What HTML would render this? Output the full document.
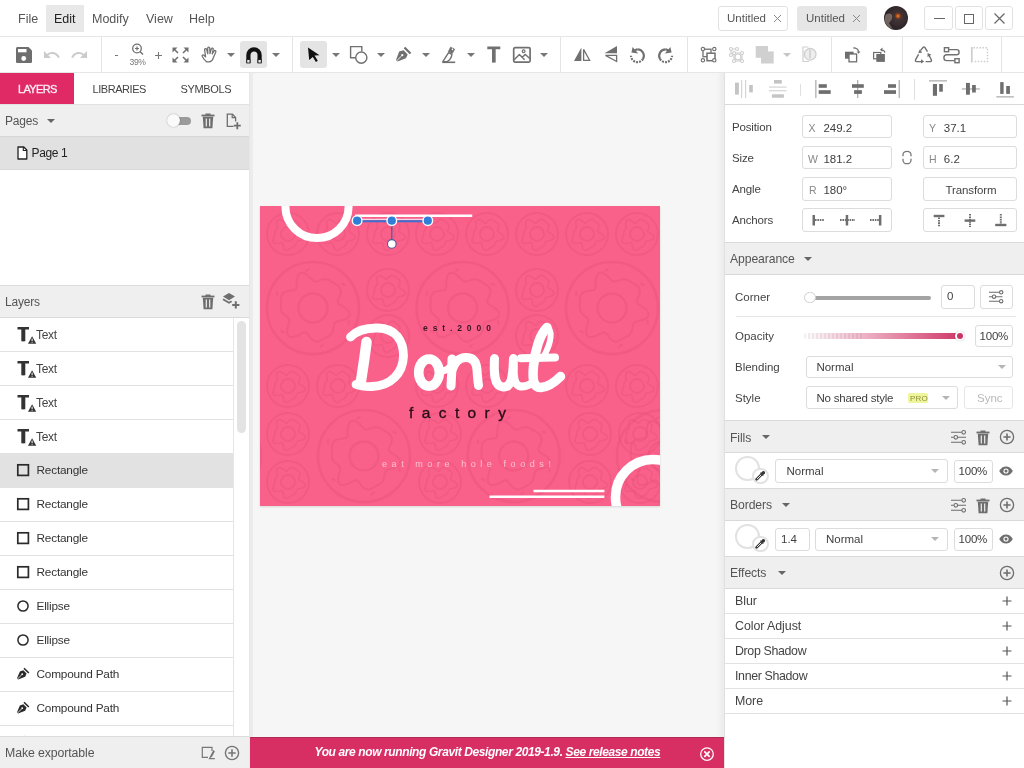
<!DOCTYPE html>
<html><head><meta charset="utf-8">
<style>
*{box-sizing:border-box;margin:0;padding:0}
html,body{width:1024px;height:768px;overflow:hidden;-webkit-font-smoothing:antialiased;background:#fff;font-family:"Liberation Sans",sans-serif;color:#444;font-size:13px}
.a{position:absolute}
.t{position:absolute;white-space:nowrap;line-height:1}
svg{position:absolute;overflow:visible}
.vs{position:absolute;width:1px;background:#e4e4e4}
.hs{position:absolute;height:1px;background:#e4e4e4}
.dd{position:absolute;width:0;height:0;border-left:4px solid transparent;border-right:4px solid transparent;border-top:4px solid #666}
.row{position:absolute;left:0;width:233px;height:34px;border-bottom:1px solid #e2e2e2;background:#fff}
.row .t{left:36px;top:11px;font-size:12px;color:#444;letter-spacing:-0.2px}
.hdr{position:absolute;background:#efefef}
.box{position:absolute;border:1px solid #dcdcdc;border-radius:3px;background:#fff}
.lbl{position:absolute;white-space:nowrap;line-height:1;font-size:12px;color:#444;letter-spacing:-0.2px}
</style></head><body><div style="position:absolute;left:0;top:0;width:1024px;height:768px;will-change:transform;overflow:hidden">
<!-- MENUBAR -->
<div class="a" style="left:0;top:0;width:1024px;height:36px;background:#fff"></div>
<div class="a" style="left:46px;top:5px;width:38px;height:27px;background:#e8e8e8"></div>
<div class="t" style="left:18px;top:13px;font-size:12.5px;color:#555">File</div>
<div class="t" style="left:54px;top:13px;font-size:12.5px;color:#222">Edit</div>
<div class="t" style="left:92px;top:13px;font-size:12.5px;color:#555">Modify</div>
<div class="t" style="left:146px;top:13px;font-size:12.5px;color:#555">View</div>
<div class="t" style="left:189px;top:13px;font-size:12.5px;color:#555">Help</div>
<!-- doc tabs -->
<div class="box" style="left:718px;top:6px;width:70px;height:25px;border-color:#e2e2e2"></div>
<div class="t" style="left:727px;top:13px;font-size:11.5px;color:#555">Untitled</div>
<svg style="left:773px;top:14px" width="9" height="9"><path d="M1 1L8 8M8 1L1 8" stroke="#888" stroke-width="1"/></svg>
<div class="a" style="left:797px;top:6px;width:70px;height:25px;background:#e6e6e6;border-radius:3px"></div>
<div class="t" style="left:806px;top:13px;font-size:11.5px;color:#555">Untitled</div>
<svg style="left:852px;top:14px" width="9" height="9"><path d="M1 1L8 8M8 1L1 8" stroke="#888" stroke-width="1"/></svg>
<!-- avatar -->
<svg style="left:884px;top:6px" width="24" height="24" viewBox="0 0 24 24"><defs><radialGradient id="av" cx="0.6" cy="0.45" r="0.65"><stop offset="0" stop-color="#4a3a3a"/><stop offset="1" stop-color="#241e24"/></radialGradient><radialGradient id="av2" cx="0.5" cy="0.5" r="0.5"><stop offset="0" stop-color="#ff8a20"/><stop offset="0.5" stop-color="#b04a18" stop-opacity="0.8"/><stop offset="1" stop-color="#602a20" stop-opacity="0"/></radialGradient></defs><circle cx="12" cy="12" r="12" fill="url(#av)"/><path d="M1 10C3 7 6 7 8 9C9 12 7 15 5 17C6 19 7 21 9 23C5 22 1.5 19 0.5 14z" fill="#8a7a70" opacity="0.75"/><circle cx="14" cy="10" r="4" fill="url(#av2)"/></svg>
<!-- window buttons -->
<div class="box" style="left:924px;top:6px;width:29px;height:24px;border-color:#e2e2e2"></div>
<div class="box" style="left:955px;top:6px;width:28px;height:24px;border-color:#e2e2e2"></div>
<div class="box" style="left:985px;top:6px;width:28px;height:24px;border-color:#e2e2e2"></div>
<div class="a" style="left:934px;top:18px;width:11px;height:1.2px;background:#666"></div>
<div class="a" style="left:964px;top:14px;width:10px;height:10px;border:1.2px solid #666"></div>
<svg style="left:994px;top:13px" width="11" height="11"><path d="M0.5 0.5L10.5 10.5M10.5 0.5L0.5 10.5" stroke="#666" stroke-width="1.2"/></svg>

<!-- TOOLBAR -->
<div class="hs" style="left:0;top:36px;width:1024px;background:#e6e6e6"></div>
<div class="hs" style="left:0;top:72px;width:1024px;background:#e6e6e6"></div>
<div class="vs" style="left:101px;top:37px;height:35px"></div>
<div class="vs" style="left:292px;top:37px;height:35px"></div>
<div class="vs" style="left:560px;top:37px;height:35px"></div>
<div class="vs" style="left:687px;top:37px;height:35px"></div>
<div class="vs" style="left:831px;top:37px;height:35px"></div>
<div class="vs" style="left:902px;top:37px;height:35px"></div>
<div class="vs" style="left:1001px;top:37px;height:35px"></div>
<!-- save -->
<svg style="left:15px;top:46px" width="18" height="18" viewBox="0 0 18 18"><path d="M13.5 1H2.6C1.7 1 1 1.7 1 2.6v12.8c0 .9.7 1.6 1.6 1.6h12.8c.9 0 1.6-.7 1.6-1.6V4.5z" fill="#6e6e6e"/><rect x="3" y="3" width="8.5" height="3.3" fill="#fff"/><circle cx="8.7" cy="12.5" r="2.4" fill="#fff"/></svg>
<!-- undo / redo -->
<svg style="left:43px;top:49px" width="17" height="11" viewBox="0 0 17 11"><path d="M1 2v7h7L5.3 6.3C6.4 5.4 7.7 4.9 9.3 4.9c2.6 0 4.8 1.7 5.6 4.1l1.8-.6C15.6 5.3 12.7 3 9.3 3 7.3 3 5.5 3.7 4.1 5z" fill="#cbcbcb"/></svg>
<svg style="left:71px;top:49px;transform:scaleX(-1)" width="17" height="11" viewBox="0 0 17 11"><path d="M1 2v7h7L5.3 6.3C6.4 5.4 7.7 4.9 9.3 4.9c2.6 0 4.8 1.7 5.6 4.1l1.8-.6C15.6 5.3 12.7 3 9.3 3 7.3 3 5.5 3.7 4.1 5z" fill="#cbcbcb"/></svg>
<!-- zoom -->
<div class="a" style="left:115px;top:55px;width:3px;height:1px;background:#777"></div>
<svg style="left:131px;top:43px" width="14" height="12" viewBox="0 0 14 12"><circle cx="6" cy="5.5" r="4.3" fill="none" stroke="#707070" stroke-width="1.3"/><path d="M6 3.5v4M4 5.5h4" stroke="#707070" stroke-width="1.2"/><path d="M9.2 8.7l2.8 2.8" stroke="#707070" stroke-width="1.5"/></svg>
<div class="t" style="left:129.5px;top:57.5px;font-size:8.6px;color:#777;letter-spacing:-0.4px">39%</div>
<svg style="left:155px;top:52px" width="7" height="7"><path d="M3.5 0v7M0 3.5h7" stroke="#777" stroke-width="1.1"/></svg>
<!-- fit -->
<svg style="left:172px;top:47px" width="17" height="16" viewBox="0 0 17 16"><g fill="#707070"><path d="M0.5 0.5h5l-5 5z"/><path d="M16.5 0.5h-5l5 5z"/><path d="M0.5 15.5h5l-5-5z"/><path d="M16.5 15.5h-5l5-5z"/></g><g stroke="#707070" stroke-width="1.6"><path d="M2 2l4 4M15 2l-4 4M2 14l4-4M15 14l-4-4"/></g></svg>
<!-- hand -->
<svg style="left:200.5px;top:46px" width="18" height="17" viewBox="0 0 18 17"><path d="M5.5 15.8C3.5 14 2 12 1.2 10.2C0.8 9.2 2 8.4 2.9 9.2L4.6 10.8L3.6 3.6C3.4 2.4 5.3 2.1 5.6 3.3L6.8 7.8L6.7 2.1C6.7 0.9 8.7 0.9 8.7 2.1L9 7.6L10.3 2.8C10.6 1.6 12.5 2 12.2 3.2L11.2 8L13.1 5C13.7 4 15.3 4.8 14.8 5.9L12.4 11.5C11.6 14.3 10.2 15.8 8 15.8Z" fill="none" stroke="#707070" stroke-width="1.25" stroke-linejoin="round"/></svg>
<div class="dd" style="left:227px;top:53px;border-top-color:#777;border-top-width:4.5px"></div>
<!-- magnet -->
<div class="a" style="left:240px;top:41px;width:27px;height:27px;background:#e4e4e4;border-radius:3px"></div>
<svg style="left:246px;top:47px" width="16" height="17" viewBox="0 0 16 17"><path d="M2.4 16V8a5.6 5.6 0 0 1 11.2 0v8" fill="none" stroke="#111" stroke-width="4.2"/><rect x="0.8" y="12.6" width="3.2" height="3.4" fill="#e8e8e8" stroke="#111" stroke-width="0.8"/><rect x="12" y="12.6" width="3.2" height="3.4" fill="#e8e8e8" stroke="#111" stroke-width="0.8"/></svg>
<div class="dd" style="left:272px;top:53px;border-top-color:#777;border-top-width:4.5px"></div>
<!-- select -->
<div class="a" style="left:300px;top:41px;width:27px;height:27px;background:#e4e4e4;border-radius:3px"></div>
<svg style="left:307px;top:47px" width="14" height="16" viewBox="0 0 14 16"><path d="M1 0.5 12.5 8.2 7.6 8.6 10.8 13.7 8.9 15 5.8 9.9 2.2 13z" fill="#111"/></svg>
<div class="dd" style="left:332px;top:53px;border-top-color:#777;border-top-width:4.5px"></div>
<!-- shape -->
<svg style="left:349px;top:45px" width="20" height="20" viewBox="0 0 20 20"><path d="M7 12.7H1.6V1.6h11.2v4.6" fill="none" stroke="#707070" stroke-width="1.4"/><circle cx="12.3" cy="12.6" r="5.6" fill="none" stroke="#707070" stroke-width="1.4"/></svg>
<div class="dd" style="left:377px;top:53px;border-top-color:#777;border-top-width:4.5px"></div>
<!-- pen -->
<svg style="left:395px;top:46px" width="17" height="17" viewBox="0 0 17 17"><path d="M9.5 1.5l6 6" stroke="#707070" stroke-width="2.2"/><path d="M8.6 4.3 12.7 8.4 10.9 12.3 2.5 15.5 1 14 4.2 5.6z" fill="#707070"/><path d="M1.8 14.7 6.5 10" stroke="#fff" stroke-width="0.9"/><circle cx="7.3" cy="9.2" r="1.1" fill="#fff"/></svg>
<div class="dd" style="left:422px;top:53px;border-top-color:#777;border-top-width:4.5px"></div>
<!-- knife -->
<svg style="left:441px;top:46px" width="16" height="18" viewBox="0 0 16 18"><path d="M9.6 1.2 13.6 3.2 11.3 7.6 7.4 5.6z" fill="#707070" stroke="#707070" stroke-width="0.8" stroke-linejoin="round"/><circle cx="11.4" cy="3.4" r="0.8" fill="#fff"/><path d="M7.6 6.6 10.9 8.3C10.6 11.5 9 14 6.2 15.6H1.8z" fill="none" stroke="#707070" stroke-width="1.4" stroke-linejoin="round"/><path d="M1.3 16.3H14.2" stroke="#707070" stroke-width="1.6"/></svg>
<div class="dd" style="left:467px;top:53px;border-top-color:#777;border-top-width:4.5px"></div>
<!-- text T -->
<svg style="left:487px;top:47px" width="14" height="16" viewBox="0 0 14 16"><path d="M0.3 0.9h13M6.8 0.9V15.3" stroke="#707070" stroke-width="2.8" fill="none"/><path d="M6.8 0v15.5" stroke="#707070" stroke-width="3.6"/></svg>
<!-- image -->
<svg style="left:512px;top:46px" width="20" height="18" viewBox="0 0 20 18"><rect x="1.7" y="1.7" width="16.4" height="14.4" rx="1.3" fill="none" stroke="#707070" stroke-width="1.7"/><path d="M2.2 13.8 7.4 8.6 12.6 13.8M10.2 11.2 13.4 8.4 17.8 12.4" fill="none" stroke="#707070" stroke-width="1.4" stroke-linejoin="round"/><circle cx="11.6" cy="5.2" r="1.4" fill="none" stroke="#707070" stroke-width="1.2"/></svg>
<div class="dd" style="left:540px;top:53px;border-top-color:#777;border-top-width:4.5px"></div>
<!-- flip h -->
<svg style="left:573px;top:47px" width="19" height="15" viewBox="0 0 19 15"><path d="M8.4 0.5V14H1z" fill="#707070"/><path d="M10.6 2.4V13.3H16.6z" fill="none" stroke="#707070" stroke-width="1.3"/></svg>
<!-- flip v -->
<svg style="left:603px;top:45px" width="16" height="18" viewBox="0 0 16 18"><path d="M14 1V8.2H1.5z" fill="#707070"/><path d="M13.6 10.4V16.5L2.5 10.4z" fill="none" stroke="#707070" stroke-width="1.3"/></svg>
<!-- rotate left -->
<svg style="left:629px;top:46px" width="18" height="18" viewBox="0 0 18 18"><path d="M8.4 3.3A6.4 6.4 0 0 1 13.94 12.9" fill="none" stroke="#707070" stroke-width="2.2"/><path d="M13.94 12.9A6.4 6.4 0 0 1 2 9.7" fill="none" stroke="#707070" stroke-width="2.2" stroke-dasharray="1.9 1.1"/><path d="M3.6 1 2.4 6.6 9.2 7.6z" fill="#707070"/><path d="M5.8 4.3 8.4 3.3" stroke="#707070" stroke-width="2.2"/></svg>
<!-- rotate right -->
<svg style="left:656px;top:46px;transform:scaleX(-1)" width="18" height="18" viewBox="0 0 18 18"><path d="M8.4 3.3A6.4 6.4 0 0 1 13.94 12.9" fill="none" stroke="#707070" stroke-width="2.2"/><path d="M13.94 12.9A6.4 6.4 0 0 1 2 9.7" fill="none" stroke="#707070" stroke-width="2.2" stroke-dasharray="1.9 1.1"/><path d="M3.6 1 2.4 6.6 9.2 7.6z" fill="#707070"/><path d="M5.8 4.3 8.4 3.3" stroke="#707070" stroke-width="2.2"/></svg>
<!-- group -->
<svg style="left:700px;top:46px" width="18" height="17" viewBox="0 0 18 17"><rect x="3" y="3.2" width="8" height="7.5" fill="none" stroke="#707070" stroke-width="1.3"/><rect x="7" y="7.2" width="8" height="7.5" fill="#fff" stroke="#707070" stroke-width="1.5"/><g fill="#fff" stroke="#707070" stroke-width="1.1"><circle cx="2.9" cy="3.1" r="1.7"/><circle cx="14.3" cy="3.1" r="1.7"/><circle cx="2.9" cy="14.3" r="1.7"/><circle cx="14.3" cy="14.3" r="1.7"/></g></svg>
<!-- ungroup light -->
<svg style="left:728px;top:46px" width="18" height="18" viewBox="0 0 18 18"><g fill="none" stroke="#cdcdcd" stroke-width="1.1"><circle cx="3" cy="3" r="1.5"/><circle cx="9" cy="3" r="1.5"/><circle cx="3" cy="9" r="1.5"/><circle cx="6" cy="7" r="1.5"/><circle cx="14" cy="7" r="1.5"/><circle cx="6" cy="15" r="1.5"/><circle cx="14" cy="15" r="1.5"/><circle cx="10" cy="11" r="3"/><path d="M4.5 3h3M3 4.5v3M7.5 7h5M6 8.5v5M14 8.5v5M7.5 15h5"/></g></svg>
<!-- boolean -->
<svg style="left:755px;top:46px" width="20" height="18" viewBox="0 0 20 18"><rect x="0.7" y="0" width="12.3" height="11.8" fill="#d0d0d0"/><rect x="6" y="5.4" width="12.7" height="12.1" fill="#d0d0d0"/></svg>
<div class="dd" style="left:783px;top:53px;border-top-color:#c5c5c5;border-top-width:4.5px"></div>
<!-- mask -->
<svg style="left:802px;top:46px" width="15" height="17" viewBox="0 0 15 17"><path d="M6.5 1H1v14.5h6" fill="none" stroke="#cfcfcf" stroke-width="1.2"/><circle cx="8.2" cy="8.3" r="5.8" fill="#eeeeee" stroke="#cfcfcf" stroke-width="1.3"/><path d="M8 4v8.5" stroke="#cfcfcf" stroke-width="1.6"/></svg>
<!-- bring forward -->
<svg style="left:844px;top:46px" width="17" height="17" viewBox="0 0 17 17"><rect x="1" y="5.7" width="8.6" height="7" fill="#6e6e6e"/><rect x="5" y="8" width="7.6" height="7.8" fill="#fff" stroke="#6e6e6e" stroke-width="1.3"/><path d="M9.3 1.8c3 0 5 1.5 5.3 4" fill="none" stroke="#6e6e6e" stroke-width="1.2"/><path d="M12.6 5.5h4l-2 2.2z" fill="#6e6e6e"/></svg>
<!-- send backward -->
<svg style="left:872px;top:46px" width="17" height="17" viewBox="0 0 17 17"><rect x="1.6" y="6.5" width="7.2" height="6.3" fill="#fff" stroke="#6e6e6e" stroke-width="1.2"/><rect x="4.3" y="8" width="8.6" height="7.9" fill="#6e6e6e"/><path d="M9.6 4c1.8 0 3 .6 3.3 2.6" fill="none" stroke="#6e6e6e" stroke-width="1.2"/><path d="M10.5 1.6v4.2l-2.6-2z" fill="#6e6e6e"/></svg>
<!-- recycle -->
<svg style="left:914px;top:46px" width="19" height="17" viewBox="0 0 19 17"><g fill="none" stroke="#707070" stroke-width="1.4" stroke-linejoin="round"><path d="M6.4 4.6 9.2 1.3Q10 0.5 10.8 1.3L13.5 5.7"/><path d="M15 9.2 17.3 13.7Q18 15.6 16.2 15.6L11.6 15.6"/><path d="M4.6 8.4 1.6 13.7Q0.9 15.6 2.7 15.6L7.5 15.6"/></g><g fill="#707070"><path d="M4.2 7.2 8.2 6.6 5.6 3.4z"/><path d="M13.6 6.9 17.4 8.7 13.5 11z"/><path d="M7 13.2 10.2 15.4 7 17.6z"/></g></svg>
<!-- path -->
<svg style="left:942px;top:46px" width="19" height="17" viewBox="0 0 19 17"><rect x="2.4" y="1.7" width="4.2" height="4" fill="none" stroke="#707070" stroke-width="1.4"/><rect x="12.9" y="12.7" width="4.2" height="4" fill="none" stroke="#707070" stroke-width="1.4"/><path d="M6.6 3.6H14.5A2.6 2.6 0 0 1 14.5 8.8H4.8A2.9 2.9 0 0 0 4.8 14.6H12.9" fill="none" stroke="#707070" stroke-width="1.4"/></svg>
<!-- dotted rect -->
<svg style="left:970px;top:46px" width="19" height="17" viewBox="0 0 19 17"><path d="M1.8 1v15.5" stroke="#cdcdcd" stroke-width="1.7"/><path d="M3.5 1.8H17.5V15.5H3.5" fill="none" stroke="#cdcdcd" stroke-width="1.4" stroke-dasharray="1.5 1.5"/></svg>


<!-- LEFT PANEL -->
<div class="a" style="left:0;top:73px;width:249px;height:664px;background:#fff"></div>
<div class="a" style="left:249px;top:73px;width:1px;height:695px;background:#e6e6e6"></div>
<div class="a" style="left:0;top:73px;width:74px;height:31px;background:#df2a65"></div>
<div class="t" style="left:18px;top:84px;font-size:11px;color:#fff;letter-spacing:-0.65px;-webkit-text-stroke:0.35px #fde">LAYERS</div>
<div class="t" style="left:92.5px;top:84px;font-size:11px;color:#444;letter-spacing:-0.45px">LIBRARIES</div>
<div class="t" style="left:180.5px;top:84px;font-size:11px;color:#444;letter-spacing:-0.35px">SYMBOLS</div>
<div class="hdr" style="left:0;top:104px;width:249px;height:33px;border-top:1px solid #e2e2e2;border-bottom:1px solid #d6d6d6"></div>
<div class="lbl" style="left:5px;top:115px;color:#555">Pages</div>
<div class="dd" style="left:47px;top:119px;border-top-color:#666;border-top-width:4.5px"></div>
<div class="hdr" style="left:0;top:137px;width:249px;height:33px;background:#e1e1e1;border-bottom:1px solid #d9d9d9"></div>
<div class="lbl" style="left:31.5px;top:146.5px;color:#222;letter-spacing:-0.35px">Page 1</div>
<div class="hdr" style="left:0;top:285px;width:249px;height:33px;border-top:1px solid #dcdcdc;border-bottom:1px solid #d9d9d9"></div>
<div class="lbl" style="left:5px;top:296px;color:#555">Layers</div>
<div class="row" style="top:318px;background:#fff"></div>
<svg style="left:17px;top:327px" width="20" height="18" viewBox="0 0 20 18"><path d="M0.5 1.2H12M6.3 1V14.2" stroke="#333" stroke-width="2.4"/><path d="M6.3 1V14.2" stroke="#333" stroke-width="4"/><path d="M15.1 9.2 19.2 16.8H11z" fill="#333"/><path d="M15.1 11.6v2.6" stroke="#fff" stroke-width="1"/><circle cx="15.1" cy="15.3" r="0.55" fill="#fff"/></svg>
<div class="t" style="left:36px;top:328.5px;font-size:12px;color:#444;letter-spacing:-0.3px">Text</div>
<div class="row" style="top:352px;background:#fff"></div>
<svg style="left:17px;top:361px" width="20" height="18" viewBox="0 0 20 18"><path d="M0.5 1.2H12M6.3 1V14.2" stroke="#333" stroke-width="2.4"/><path d="M6.3 1V14.2" stroke="#333" stroke-width="4"/><path d="M15.1 9.2 19.2 16.8H11z" fill="#333"/><path d="M15.1 11.6v2.6" stroke="#fff" stroke-width="1"/><circle cx="15.1" cy="15.3" r="0.55" fill="#fff"/></svg>
<div class="t" style="left:36px;top:362.5px;font-size:12px;color:#444;letter-spacing:-0.3px">Text</div>
<div class="row" style="top:386px;background:#fff"></div>
<svg style="left:17px;top:395px" width="20" height="18" viewBox="0 0 20 18"><path d="M0.5 1.2H12M6.3 1V14.2" stroke="#333" stroke-width="2.4"/><path d="M6.3 1V14.2" stroke="#333" stroke-width="4"/><path d="M15.1 9.2 19.2 16.8H11z" fill="#333"/><path d="M15.1 11.6v2.6" stroke="#fff" stroke-width="1"/><circle cx="15.1" cy="15.3" r="0.55" fill="#fff"/></svg>
<div class="t" style="left:36px;top:396.5px;font-size:12px;color:#444;letter-spacing:-0.3px">Text</div>
<div class="row" style="top:420px;background:#fff"></div>
<svg style="left:17px;top:429px" width="20" height="18" viewBox="0 0 20 18"><path d="M0.5 1.2H12M6.3 1V14.2" stroke="#333" stroke-width="2.4"/><path d="M6.3 1V14.2" stroke="#333" stroke-width="4"/><path d="M15.1 9.2 19.2 16.8H11z" fill="#333"/><path d="M15.1 11.6v2.6" stroke="#fff" stroke-width="1"/><circle cx="15.1" cy="15.3" r="0.55" fill="#fff"/></svg>
<div class="t" style="left:36px;top:430.5px;font-size:12px;color:#444;letter-spacing:-0.3px">Text</div>
<div class="row" style="top:454px;background:#e2e2e2"></div>
<svg style="left:16px;top:463px" width="14" height="14" viewBox="0 0 14 14"><rect x="1.8" y="1.8" width="10.6" height="10.6" fill="none" stroke="#2a2a2a" stroke-width="1.7"/></svg>
<div class="t" style="left:36.5px;top:464.5px;font-size:11.8px;color:#333;letter-spacing:-0.2px">Rectangle</div>
<div class="row" style="top:488px;background:#fff"></div>
<svg style="left:16px;top:497px" width="14" height="14" viewBox="0 0 14 14"><rect x="1.8" y="1.8" width="10.6" height="10.6" fill="none" stroke="#2a2a2a" stroke-width="1.7"/></svg>
<div class="t" style="left:36.5px;top:498.5px;font-size:11.8px;color:#333;letter-spacing:-0.2px">Rectangle</div>
<div class="row" style="top:522px;background:#fff"></div>
<svg style="left:16px;top:531px" width="14" height="14" viewBox="0 0 14 14"><rect x="1.8" y="1.8" width="10.6" height="10.6" fill="none" stroke="#2a2a2a" stroke-width="1.7"/></svg>
<div class="t" style="left:36.5px;top:532.5px;font-size:11.8px;color:#333;letter-spacing:-0.2px">Rectangle</div>
<div class="row" style="top:556px;background:#fff"></div>
<svg style="left:16px;top:565px" width="14" height="14" viewBox="0 0 14 14"><rect x="1.8" y="1.8" width="10.6" height="10.6" fill="none" stroke="#2a2a2a" stroke-width="1.7"/></svg>
<div class="t" style="left:36.5px;top:566.5px;font-size:11.8px;color:#333;letter-spacing:-0.2px">Rectangle</div>
<div class="row" style="top:590px;background:#fff"></div>
<svg style="left:17px;top:600px" width="12" height="12" viewBox="0 0 12 12"><circle cx="6" cy="6" r="5.1" fill="none" stroke="#2a2a2a" stroke-width="1.5"/></svg>
<div class="t" style="left:36.5px;top:600.5px;font-size:11.8px;color:#333;letter-spacing:-0.2px">Ellipse</div>
<div class="row" style="top:624px;background:#fff"></div>
<svg style="left:17px;top:634px" width="12" height="12" viewBox="0 0 12 12"><circle cx="6" cy="6" r="5.1" fill="none" stroke="#2a2a2a" stroke-width="1.5"/></svg>
<div class="t" style="left:36.5px;top:634.5px;font-size:11.8px;color:#333;letter-spacing:-0.2px">Ellipse</div>
<div class="row" style="top:658px;background:#fff"></div>
<svg style="left:16px;top:667px" width="14" height="14" viewBox="0 0 14 14"><path d="M8 1.2 12.8 6" stroke="#2a2a2a" stroke-width="1.6"/><path d="M7.3 3.3 10.6 6.6 9.2 9.7 2.1 12.6 0.9 11.4 3.9 4.4z" fill="#2a2a2a"/><path d="M1.5 12 5.7 7.8" stroke="#fff" stroke-width="0.8"/><circle cx="6.2" cy="7.2" r="0.9" fill="#fff"/></svg>
<div class="t" style="left:36.5px;top:668.5px;font-size:11.8px;color:#333;letter-spacing:-0.2px">Compound Path</div>
<div class="row" style="top:692px;background:#fff"></div>
<svg style="left:16px;top:701px" width="14" height="14" viewBox="0 0 14 14"><path d="M8 1.2 12.8 6" stroke="#2a2a2a" stroke-width="1.6"/><path d="M7.3 3.3 10.6 6.6 9.2 9.7 2.1 12.6 0.9 11.4 3.9 4.4z" fill="#2a2a2a"/><path d="M1.5 12 5.7 7.8" stroke="#fff" stroke-width="0.8"/><circle cx="6.2" cy="7.2" r="0.9" fill="#fff"/></svg>
<div class="t" style="left:36.5px;top:702.5px;font-size:11.8px;color:#333;letter-spacing:-0.2px">Compound Path</div>
<div class="row" style="top:726px;background:#fff"></div>
<svg style="left:16px;top:735px" width="14" height="14" viewBox="0 0 14 14"><path d="M8 1.2 12.8 6" stroke="#2a2a2a" stroke-width="1.6"/><path d="M7.3 3.3 10.6 6.6 9.2 9.7 2.1 12.6 0.9 11.4 3.9 4.4z" fill="#2a2a2a"/><path d="M1.5 12 5.7 7.8" stroke="#fff" stroke-width="0.8"/><circle cx="6.2" cy="7.2" r="0.9" fill="#fff"/></svg>
<div class="a" style="left:233px;top:318px;width:1px;height:418px;background:#e6e6e6"></div>
<div class="a" style="left:237px;top:321px;width:9px;height:112px;background:#e3e3e3;border-radius:5px"></div>
<div class="a" style="left:173px;top:117px;width:18px;height:8px;background:#9a9a9a;border-radius:4px"></div>
<div class="a" style="left:167px;top:114px;width:13px;height:13px;background:#fafafa;border-radius:50%;box-shadow:0 0 1.5px rgba(0,0,0,0.35)"></div>
<svg style="left:201px;top:113px" width="14" height="16" viewBox="0 0 14 16"><path d="M0.5 2.5H13.5" stroke="#6e6e6e" stroke-width="1.8"/><path d="M4.5 1.3H9.5" stroke="#6e6e6e" stroke-width="1.6"/><path d="M1.8 3.8H12.2L11.4 15.2H2.6z" fill="#6e6e6e"/><path d="M5.3 5.6V13.6M8.7 5.6V13.6" stroke="#efefef" stroke-width="1.2"/></svg>
<svg style="left:226px;top:113px" width="15" height="17" viewBox="0 0 15 17"><path d="M7.5 13.4H1.3V1.2H6.4L9.6 4.4V8.5" fill="none" stroke="#6e6e6e" stroke-width="1.3"/><path d="M6.2 1.2v3.4h3.4" fill="none" stroke="#6e6e6e" stroke-width="1.2"/><path d="M11.3 9.2V16.2M7.8 12.7H14.8" stroke="#6e6e6e" stroke-width="1.8"/></svg>
<svg style="left:17px;top:146px" width="11" height="14" viewBox="0 0 11 14"><path d="M1 1H6.8L9.8 4V13H1z" fill="#fff" stroke="#222" stroke-width="1.3" stroke-linejoin="round"/><path d="M6.3 1V4.5H9.8" fill="none" stroke="#222" stroke-width="1.1"/></svg>
<svg style="left:201px;top:294px" width="14" height="16" viewBox="0 0 14 16"><path d="M0.5 2.5H13.5" stroke="#6e6e6e" stroke-width="1.8"/><path d="M4.5 1.3H9.5" stroke="#6e6e6e" stroke-width="1.6"/><path d="M1.8 3.8H12.2L11.4 15.2H2.6z" fill="#6e6e6e"/><path d="M5.3 5.6V13.6M8.7 5.6V13.6" stroke="#efefef" stroke-width="1.2"/></svg>
<svg style="left:222px;top:292px" width="19" height="18" viewBox="0 0 19 18"><path d="M7 1 13 4.6 7 8.2 1 4.6z" fill="#6e6e6e"/><path d="M1 7.2 7 10.8 9.6 9.3" fill="none" stroke="#6e6e6e" stroke-width="1.7"/><path d="M13.8 9.3V16.5M10.2 12.9H17.4" stroke="#6e6e6e" stroke-width="2"/></svg>
<div class="hdr" style="left:0;top:736px;width:249px;height:32px;border-top:1px solid #dcdcdc"></div>
<div class="lbl" style="left:5px;top:747px;color:#555;font-size:12.3px;letter-spacing:-0.1px">Make exportable</div>
<svg style="left:201px;top:745px" width="15" height="15" viewBox="0 0 15 15"><path d="M7 12.3H1.3V2.3H11V6" fill="none" stroke="#777" stroke-width="1.2"/><path d="M12.8 5.5 8.5 13.6H13.8" fill="none" stroke="#777" stroke-width="1.2"/><path d="M9.5 11.5 12.6 5.6 13.9 6.3 10.8 12.2z" fill="#777"/></svg>
<svg style="left:224px;top:745px" width="16" height="16" viewBox="0 0 16 16"><circle cx="8" cy="8" r="6.6" fill="none" stroke="#777" stroke-width="1.4"/><path d="M8 4.3V11.7M4.3 8H11.7" stroke="#777" stroke-width="1.6"/></svg>

<!-- CANVAS -->
<div class="a" style="left:250px;top:73px;width:474px;height:664px;background:#f6f6f6"></div>
<div class="a" style="left:250px;top:73px;width:2.5px;height:664px;background:#ececec"></div>
<div class="a" style="left:716px;top:73px;width:8px;height:664px;background:linear-gradient(90deg,rgba(0,0,0,0),rgba(0,0,0,0.045))"></div>
<div class="a" style="left:260px;top:206px;width:400px;height:300px;background:#fa618a;box-shadow:0 1px 2px rgba(0,0,0,0.12);overflow:hidden">
<svg style="left:0;top:0" width="400" height="300" viewBox="260 206 400 300"><g fill="none" stroke="#e4507a" stroke-opacity="0.42"><circle cx="313" cy="308" r="46" stroke-width="2.6"/><circle cx="313" cy="308" r="14.5" stroke-width="2.4"/><path d="M345.2 308.0 L348.5 311.1 L349.7 314.5 L348.3 317.5 L344.7 319.5 L340.4 320.8 L336.7 321.7 L334.6 323.1 L333.8 325.4 L333.4 328.4 L332.7 331.5 L331.2 334.1 L329.1 335.9 L326.6 337.2 L324.1 338.5 L321.6 340.0 L318.9 341.2 L315.9 341.5 L313.0 340.2 L310.4 337.6 L308.3 334.7 L306.4 332.6 L304.1 332.3 L301.0 333.8 L296.9 335.9 L292.6 337.2 L289.0 336.6 L287.2 333.8 L287.2 329.7 L288.3 325.3 L289.3 321.7 L289.1 319.1 L287.5 317.3 L285.1 315.5 L282.8 313.3 L281.3 310.8 L280.8 308.0 L280.9 305.2 L281.0 302.4 L281.0 299.4 L281.3 296.5 L282.6 293.8 L285.1 291.9 L288.6 290.9 L292.2 290.6 L295.0 290.0 L296.4 288.2 L296.7 284.7 L296.9 280.1 L297.9 275.7 L300.2 272.9 L303.5 272.7 L307.1 274.8 L310.4 277.9 L313.0 280.6 L315.3 281.7 L317.7 281.3 L320.5 280.1 L323.5 279.2 L326.4 279.2 L329.1 280.1 L331.5 281.6 L333.9 283.1 L336.4 284.6 L338.8 286.3 L340.5 288.7 L340.9 291.9 L340.0 295.4 L338.5 298.7 L337.6 301.4 L338.5 303.5 L341.3 305.5 L345.2 308.0Z" stroke-width="2"/><path d="M348.7 321.0 l0.1 3.0" stroke-width="2" stroke-linecap="round"/><path d="M322.8 344.7 l-2.4 1.8" stroke-width="2" stroke-linecap="round"/><path d="M283.9 332.4 l-2.6 -1.4" stroke-width="2" stroke-linecap="round"/><path d="M277.3 295.0 l-0.1 -3.0" stroke-width="2" stroke-linecap="round"/><path d="M306.4 270.6 l2.6 -1.6" stroke-width="2" stroke-linecap="round"/><path d="M342.1 283.6 l2.6 1.4" stroke-width="2" stroke-linecap="round"/><circle cx="462.6" cy="308" r="46" stroke-width="2.6"/><circle cx="462.6" cy="308" r="14.5" stroke-width="2.4"/><path d="M494.8 308.0 L498.1 311.1 L499.3 314.5 L497.9 317.5 L494.3 319.5 L490.0 320.8 L486.3 321.7 L484.2 323.1 L483.4 325.4 L483.0 328.4 L482.3 331.5 L480.8 334.1 L478.7 335.9 L476.2 337.2 L473.7 338.5 L471.2 340.0 L468.5 341.2 L465.5 341.5 L462.6 340.2 L460.0 337.6 L457.9 334.7 L456.0 332.6 L453.7 332.3 L450.6 333.8 L446.5 335.9 L442.2 337.2 L438.6 336.6 L436.8 333.8 L436.8 329.7 L437.9 325.3 L438.9 321.7 L438.7 319.1 L437.1 317.3 L434.7 315.5 L432.4 313.3 L430.9 310.8 L430.4 308.0 L430.5 305.2 L430.6 302.4 L430.6 299.4 L430.9 296.5 L432.2 293.8 L434.7 291.9 L438.2 290.9 L441.8 290.6 L444.6 290.0 L446.0 288.2 L446.3 284.7 L446.5 280.1 L447.5 275.7 L449.8 272.9 L453.1 272.7 L456.7 274.8 L460.0 277.9 L462.6 280.6 L464.9 281.7 L467.3 281.3 L470.1 280.1 L473.1 279.2 L476.0 279.2 L478.7 280.1 L481.1 281.6 L483.5 283.1 L486.0 284.6 L488.4 286.3 L490.1 288.7 L490.5 291.9 L489.6 295.4 L488.1 298.7 L487.2 301.4 L488.1 303.5 L490.9 305.5 L494.8 308.0Z" stroke-width="2"/><path d="M498.3 321.0 l0.1 3.0" stroke-width="2" stroke-linecap="round"/><path d="M472.4 344.7 l-2.4 1.8" stroke-width="2" stroke-linecap="round"/><path d="M433.5 332.4 l-2.6 -1.4" stroke-width="2" stroke-linecap="round"/><path d="M426.9 295.0 l-0.1 -3.0" stroke-width="2" stroke-linecap="round"/><path d="M456.0 270.6 l2.6 -1.6" stroke-width="2" stroke-linecap="round"/><path d="M491.7 283.6 l2.6 1.4" stroke-width="2" stroke-linecap="round"/><circle cx="612" cy="308" r="46" stroke-width="2.6"/><circle cx="612" cy="308" r="14.5" stroke-width="2.4"/><path d="M644.2 308.0 L647.5 311.1 L648.7 314.5 L647.3 317.5 L643.7 319.5 L639.4 320.8 L635.7 321.7 L633.6 323.1 L632.8 325.4 L632.4 328.4 L631.7 331.5 L630.2 334.1 L628.1 335.9 L625.6 337.2 L623.1 338.5 L620.6 340.0 L617.9 341.2 L614.9 341.5 L612.0 340.2 L609.4 337.6 L607.3 334.7 L605.4 332.6 L603.1 332.3 L600.0 333.8 L595.9 335.9 L591.6 337.2 L588.0 336.6 L586.2 333.8 L586.2 329.7 L587.3 325.3 L588.3 321.7 L588.1 319.1 L586.5 317.3 L584.1 315.5 L581.8 313.3 L580.3 310.8 L579.8 308.0 L579.9 305.2 L580.0 302.4 L580.0 299.4 L580.3 296.5 L581.6 293.8 L584.1 291.9 L587.6 290.9 L591.2 290.6 L594.0 290.0 L595.4 288.2 L595.7 284.7 L595.9 280.1 L596.9 275.7 L599.2 272.9 L602.5 272.7 L606.1 274.8 L609.4 277.9 L612.0 280.6 L614.3 281.7 L616.7 281.3 L619.5 280.1 L622.5 279.2 L625.4 279.2 L628.1 280.1 L630.5 281.6 L632.9 283.1 L635.4 284.6 L637.8 286.3 L639.5 288.7 L639.9 291.9 L639.0 295.4 L637.5 298.7 L636.6 301.4 L637.5 303.5 L640.3 305.5 L644.2 308.0Z" stroke-width="2"/><path d="M647.7 321.0 l0.1 3.0" stroke-width="2" stroke-linecap="round"/><path d="M621.8 344.7 l-2.4 1.8" stroke-width="2" stroke-linecap="round"/><path d="M582.9 332.4 l-2.6 -1.4" stroke-width="2" stroke-linecap="round"/><path d="M576.3 295.0 l-0.1 -3.0" stroke-width="2" stroke-linecap="round"/><path d="M605.4 270.6 l2.6 -1.6" stroke-width="2" stroke-linecap="round"/><path d="M641.1 283.6 l2.6 1.4" stroke-width="2" stroke-linecap="round"/><circle cx="364" cy="456" r="46" stroke-width="2.6"/><circle cx="364" cy="456" r="14.5" stroke-width="2.4"/><path d="M396.2 456.0 L399.5 459.1 L400.7 462.5 L399.3 465.5 L395.7 467.5 L391.4 468.8 L387.7 469.7 L385.6 471.1 L384.8 473.4 L384.4 476.4 L383.7 479.5 L382.2 482.1 L380.1 483.9 L377.6 485.2 L375.1 486.5 L372.6 488.0 L369.9 489.2 L366.9 489.5 L364.0 488.2 L361.4 485.6 L359.3 482.7 L357.4 480.6 L355.1 480.3 L352.0 481.8 L347.9 483.9 L343.6 485.2 L340.0 484.6 L338.2 481.8 L338.2 477.7 L339.3 473.3 L340.3 469.7 L340.1 467.1 L338.5 465.3 L336.1 463.5 L333.8 461.3 L332.3 458.8 L331.8 456.0 L331.9 453.2 L332.0 450.4 L332.0 447.4 L332.3 444.5 L333.6 441.8 L336.1 439.9 L339.6 438.9 L343.2 438.6 L346.0 438.0 L347.4 436.2 L347.7 432.7 L347.9 428.1 L348.9 423.7 L351.2 420.9 L354.5 420.7 L358.1 422.8 L361.4 425.9 L364.0 428.6 L366.3 429.7 L368.7 429.3 L371.5 428.1 L374.5 427.2 L377.4 427.2 L380.1 428.1 L382.5 429.6 L384.9 431.1 L387.4 432.6 L389.8 434.3 L391.5 436.7 L391.9 439.9 L391.0 443.4 L389.5 446.7 L388.6 449.4 L389.5 451.5 L392.3 453.5 L396.2 456.0Z" stroke-width="2"/><path d="M399.7 469.0 l0.1 3.0" stroke-width="2" stroke-linecap="round"/><path d="M373.8 492.7 l-2.4 1.8" stroke-width="2" stroke-linecap="round"/><path d="M334.9 480.4 l-2.6 -1.4" stroke-width="2" stroke-linecap="round"/><path d="M328.3 443.0 l-0.1 -3.0" stroke-width="2" stroke-linecap="round"/><path d="M357.4 418.6 l2.6 -1.6" stroke-width="2" stroke-linecap="round"/><path d="M393.1 431.6 l2.6 1.4" stroke-width="2" stroke-linecap="round"/><circle cx="513.7" cy="456" r="46" stroke-width="2.6"/><circle cx="513.7" cy="456" r="14.5" stroke-width="2.4"/><path d="M545.9 456.0 L549.2 459.1 L550.4 462.5 L549.0 465.5 L545.4 467.5 L541.1 468.8 L537.4 469.7 L535.3 471.1 L534.5 473.4 L534.1 476.4 L533.4 479.5 L531.9 482.1 L529.8 483.9 L527.3 485.2 L524.8 486.5 L522.3 488.0 L519.6 489.2 L516.6 489.5 L513.7 488.2 L511.1 485.6 L509.0 482.7 L507.1 480.6 L504.8 480.3 L501.7 481.8 L497.6 483.9 L493.3 485.2 L489.7 484.6 L487.9 481.8 L487.9 477.7 L489.0 473.3 L490.0 469.7 L489.8 467.1 L488.2 465.3 L485.8 463.5 L483.5 461.3 L482.0 458.8 L481.5 456.0 L481.6 453.2 L481.7 450.4 L481.7 447.4 L482.0 444.5 L483.3 441.8 L485.8 439.9 L489.3 438.9 L492.9 438.6 L495.7 438.0 L497.1 436.2 L497.4 432.7 L497.6 428.1 L498.6 423.7 L500.9 420.9 L504.2 420.7 L507.8 422.8 L511.1 425.9 L513.7 428.6 L516.0 429.7 L518.4 429.3 L521.2 428.1 L524.2 427.2 L527.1 427.2 L529.8 428.1 L532.2 429.6 L534.6 431.1 L537.1 432.6 L539.5 434.3 L541.2 436.7 L541.6 439.9 L540.7 443.4 L539.2 446.7 L538.3 449.4 L539.2 451.5 L542.0 453.5 L545.9 456.0Z" stroke-width="2"/><path d="M549.4 469.0 l0.1 3.0" stroke-width="2" stroke-linecap="round"/><path d="M523.5 492.7 l-2.4 1.8" stroke-width="2" stroke-linecap="round"/><path d="M484.6 480.4 l-2.6 -1.4" stroke-width="2" stroke-linecap="round"/><path d="M478.0 443.0 l-0.1 -3.0" stroke-width="2" stroke-linecap="round"/><path d="M507.1 418.6 l2.6 -1.6" stroke-width="2" stroke-linecap="round"/><path d="M542.8 431.6 l2.6 1.4" stroke-width="2" stroke-linecap="round"/><circle cx="663" cy="456" r="46" stroke-width="2.6"/><circle cx="663" cy="456" r="14.5" stroke-width="2.4"/><path d="M695.2 456.0 L698.5 459.1 L699.7 462.5 L698.3 465.5 L694.7 467.5 L690.4 468.8 L686.7 469.7 L684.6 471.1 L683.8 473.4 L683.4 476.4 L682.7 479.5 L681.2 482.1 L679.1 483.9 L676.6 485.2 L674.1 486.5 L671.6 488.0 L668.9 489.2 L665.9 489.5 L663.0 488.2 L660.4 485.6 L658.3 482.7 L656.4 480.6 L654.1 480.3 L651.0 481.8 L646.9 483.9 L642.6 485.2 L639.0 484.6 L637.2 481.8 L637.2 477.7 L638.3 473.3 L639.3 469.7 L639.1 467.1 L637.5 465.3 L635.1 463.5 L632.8 461.3 L631.3 458.8 L630.8 456.0 L630.9 453.2 L631.0 450.4 L631.0 447.4 L631.3 444.5 L632.6 441.8 L635.1 439.9 L638.6 438.9 L642.2 438.6 L645.0 438.0 L646.4 436.2 L646.7 432.7 L646.9 428.1 L647.9 423.7 L650.2 420.9 L653.5 420.7 L657.1 422.8 L660.4 425.9 L663.0 428.6 L665.3 429.7 L667.7 429.3 L670.5 428.1 L673.5 427.2 L676.4 427.2 L679.1 428.1 L681.5 429.6 L683.9 431.1 L686.4 432.6 L688.8 434.3 L690.5 436.7 L690.9 439.9 L690.0 443.4 L688.5 446.7 L687.6 449.4 L688.5 451.5 L691.3 453.5 L695.2 456.0Z" stroke-width="2"/><path d="M698.7 469.0 l0.1 3.0" stroke-width="2" stroke-linecap="round"/><path d="M672.8 492.7 l-2.4 1.8" stroke-width="2" stroke-linecap="round"/><path d="M633.9 480.4 l-2.6 -1.4" stroke-width="2" stroke-linecap="round"/><path d="M627.3 443.0 l-0.1 -3.0" stroke-width="2" stroke-linecap="round"/><path d="M656.4 418.6 l2.6 -1.6" stroke-width="2" stroke-linecap="round"/><path d="M692.1 431.6 l2.6 1.4" stroke-width="2" stroke-linecap="round"/><circle cx="215" cy="456" r="46" stroke-width="2.6"/><circle cx="215" cy="456" r="14.5" stroke-width="2.4"/><path d="M247.2 456.0 L250.5 459.1 L251.7 462.5 L250.3 465.5 L246.7 467.5 L242.4 468.8 L238.7 469.7 L236.6 471.1 L235.8 473.4 L235.4 476.4 L234.7 479.5 L233.2 482.1 L231.1 483.9 L228.6 485.2 L226.1 486.5 L223.6 488.0 L220.9 489.2 L217.9 489.5 L215.0 488.2 L212.4 485.6 L210.3 482.7 L208.4 480.6 L206.1 480.3 L203.0 481.8 L198.9 483.9 L194.6 485.2 L191.0 484.6 L189.2 481.8 L189.2 477.7 L190.3 473.3 L191.3 469.7 L191.1 467.1 L189.5 465.3 L187.1 463.5 L184.8 461.3 L183.3 458.8 L182.8 456.0 L182.9 453.2 L183.0 450.4 L183.0 447.4 L183.3 444.5 L184.6 441.8 L187.1 439.9 L190.6 438.9 L194.2 438.6 L197.0 438.0 L198.4 436.2 L198.7 432.7 L198.9 428.1 L199.9 423.7 L202.2 420.9 L205.5 420.7 L209.1 422.8 L212.4 425.9 L215.0 428.6 L217.3 429.7 L219.7 429.3 L222.5 428.1 L225.5 427.2 L228.4 427.2 L231.1 428.1 L233.5 429.6 L235.9 431.1 L238.4 432.6 L240.8 434.3 L242.5 436.7 L242.9 439.9 L242.0 443.4 L240.5 446.7 L239.6 449.4 L240.5 451.5 L243.3 453.5 L247.2 456.0Z" stroke-width="2"/><path d="M250.7 469.0 l0.1 3.0" stroke-width="2" stroke-linecap="round"/><path d="M224.8 492.7 l-2.4 1.8" stroke-width="2" stroke-linecap="round"/><path d="M185.9 480.4 l-2.6 -1.4" stroke-width="2" stroke-linecap="round"/><path d="M179.3 443.0 l-0.1 -3.0" stroke-width="2" stroke-linecap="round"/><path d="M208.4 418.6 l2.6 -1.6" stroke-width="2" stroke-linecap="round"/><path d="M244.1 431.6 l2.6 1.4" stroke-width="2" stroke-linecap="round"/><circle cx="288" cy="234" r="21" stroke-width="2"/><circle cx="288" cy="234" r="7" stroke-width="1.8"/><path d="M302.7 234.0 L304.3 235.4 L305.1 237.0 L304.8 238.5 L303.4 239.6 L301.5 240.3 L299.6 240.7 L298.0 241.0 L297.1 241.6 L296.5 242.5 L296.1 243.7 L295.6 244.9 L294.8 245.8 L293.8 246.5 L292.7 247.0 L291.6 247.6 L290.5 248.3 L289.3 249.3 L288.0 250.1 L286.6 250.4 L285.2 249.9 L284.1 248.5 L283.4 246.6 L283.0 244.7 L282.6 243.3 L281.9 242.6 L280.7 242.7 L278.8 243.2 L276.7 243.5 L274.8 243.3 L273.5 242.4 L273.0 241.0 L273.2 239.4 L273.8 237.8 L274.3 236.4 L274.6 235.2 L274.7 234.0 L274.7 232.8 L274.9 231.7 L275.5 230.6 L276.3 229.7 L276.9 228.8 L277.3 227.8 L277.2 226.4 L276.9 224.7 L276.7 222.7 L277.0 220.9 L278.1 219.8 L279.7 219.6 L281.6 220.3 L283.5 221.5 L285.0 222.7 L286.1 223.3 L287.0 223.1 L288.0 222.1 L289.2 220.8 L290.5 219.8 L291.9 219.3 L293.3 219.5 L294.5 220.1 L295.5 221.0 L296.5 221.8 L297.6 222.6 L298.6 223.4 L299.5 224.4 L299.9 225.7 L299.7 227.2 L299.2 228.8 L298.7 230.1 L298.6 231.2 L299.3 232.0 L300.8 232.9 L302.7 234.0Z" stroke-width="1.6"/><circle cx="338" cy="234" r="21" stroke-width="2"/><circle cx="338" cy="234" r="7" stroke-width="1.8"/><path d="M352.7 234.0 L354.3 235.4 L355.1 237.0 L354.8 238.5 L353.4 239.6 L351.5 240.3 L349.6 240.7 L348.0 241.0 L347.1 241.6 L346.5 242.5 L346.1 243.7 L345.6 244.9 L344.8 245.8 L343.8 246.5 L342.7 247.0 L341.6 247.6 L340.5 248.3 L339.3 249.3 L338.0 250.1 L336.6 250.4 L335.2 249.9 L334.1 248.5 L333.4 246.6 L333.0 244.7 L332.6 243.3 L331.9 242.6 L330.7 242.7 L328.8 243.2 L326.7 243.5 L324.8 243.3 L323.5 242.4 L323.0 241.0 L323.2 239.4 L323.8 237.8 L324.3 236.4 L324.6 235.2 L324.7 234.0 L324.7 232.8 L324.9 231.7 L325.5 230.6 L326.3 229.7 L326.9 228.8 L327.3 227.8 L327.2 226.4 L326.9 224.7 L326.7 222.7 L327.0 220.9 L328.1 219.8 L329.7 219.6 L331.6 220.3 L333.5 221.5 L335.0 222.7 L336.1 223.3 L337.0 223.1 L338.0 222.1 L339.2 220.8 L340.5 219.8 L341.9 219.3 L343.3 219.5 L344.5 220.1 L345.5 221.0 L346.5 221.8 L347.6 222.6 L348.6 223.4 L349.5 224.4 L349.9 225.7 L349.7 227.2 L349.2 228.8 L348.7 230.1 L348.6 231.2 L349.3 232.0 L350.8 232.9 L352.7 234.0Z" stroke-width="1.6"/><circle cx="388" cy="234" r="21" stroke-width="2"/><circle cx="388" cy="234" r="7" stroke-width="1.8"/><path d="M402.7 234.0 L404.3 235.4 L405.1 237.0 L404.8 238.5 L403.4 239.6 L401.5 240.3 L399.6 240.7 L398.0 241.0 L397.1 241.6 L396.5 242.5 L396.1 243.7 L395.6 244.9 L394.8 245.8 L393.8 246.5 L392.7 247.0 L391.6 247.6 L390.5 248.3 L389.3 249.3 L388.0 250.1 L386.6 250.4 L385.2 249.9 L384.1 248.5 L383.4 246.6 L383.0 244.7 L382.6 243.3 L381.9 242.6 L380.7 242.7 L378.8 243.2 L376.7 243.5 L374.8 243.3 L373.5 242.4 L373.0 241.0 L373.2 239.4 L373.8 237.8 L374.3 236.4 L374.6 235.2 L374.7 234.0 L374.7 232.8 L374.9 231.7 L375.5 230.6 L376.3 229.7 L376.9 228.8 L377.3 227.8 L377.2 226.4 L376.9 224.7 L376.7 222.7 L377.0 220.9 L378.1 219.8 L379.7 219.6 L381.6 220.3 L383.5 221.5 L385.0 222.7 L386.1 223.3 L387.0 223.1 L388.0 222.1 L389.2 220.8 L390.5 219.8 L391.9 219.3 L393.3 219.5 L394.5 220.1 L395.5 221.0 L396.5 221.8 L397.6 222.6 L398.6 223.4 L399.5 224.4 L399.9 225.7 L399.7 227.2 L399.2 228.8 L398.7 230.1 L398.6 231.2 L399.3 232.0 L400.8 232.9 L402.7 234.0Z" stroke-width="1.6"/><circle cx="437" cy="234" r="21" stroke-width="2"/><circle cx="437" cy="234" r="7" stroke-width="1.8"/><path d="M451.7 234.0 L453.3 235.4 L454.1 237.0 L453.8 238.5 L452.4 239.6 L450.5 240.3 L448.6 240.7 L447.0 241.0 L446.1 241.6 L445.5 242.5 L445.1 243.7 L444.6 244.9 L443.8 245.8 L442.8 246.5 L441.7 247.0 L440.6 247.6 L439.5 248.3 L438.3 249.3 L437.0 250.1 L435.6 250.4 L434.2 249.9 L433.1 248.5 L432.4 246.6 L432.0 244.7 L431.6 243.3 L430.9 242.6 L429.7 242.7 L427.8 243.2 L425.7 243.5 L423.8 243.3 L422.5 242.4 L422.0 241.0 L422.2 239.4 L422.8 237.8 L423.3 236.4 L423.6 235.2 L423.7 234.0 L423.7 232.8 L423.9 231.7 L424.5 230.6 L425.3 229.7 L425.9 228.8 L426.3 227.8 L426.2 226.4 L425.9 224.7 L425.7 222.7 L426.0 220.9 L427.1 219.8 L428.7 219.6 L430.6 220.3 L432.5 221.5 L434.0 222.7 L435.1 223.3 L436.0 223.1 L437.0 222.1 L438.2 220.8 L439.5 219.8 L440.9 219.3 L442.3 219.5 L443.5 220.1 L444.5 221.0 L445.5 221.8 L446.6 222.6 L447.6 223.4 L448.5 224.4 L448.9 225.7 L448.7 227.2 L448.2 228.8 L447.7 230.1 L447.6 231.2 L448.3 232.0 L449.8 232.9 L451.7 234.0Z" stroke-width="1.6"/><circle cx="487" cy="234" r="21" stroke-width="2"/><circle cx="487" cy="234" r="7" stroke-width="1.8"/><path d="M501.7 234.0 L503.3 235.4 L504.1 237.0 L503.8 238.5 L502.4 239.6 L500.5 240.3 L498.6 240.7 L497.0 241.0 L496.1 241.6 L495.5 242.5 L495.1 243.7 L494.6 244.9 L493.8 245.8 L492.8 246.5 L491.7 247.0 L490.6 247.6 L489.5 248.3 L488.3 249.3 L487.0 250.1 L485.6 250.4 L484.2 249.9 L483.1 248.5 L482.4 246.6 L482.0 244.7 L481.6 243.3 L480.9 242.6 L479.7 242.7 L477.8 243.2 L475.7 243.5 L473.8 243.3 L472.5 242.4 L472.0 241.0 L472.2 239.4 L472.8 237.8 L473.3 236.4 L473.6 235.2 L473.7 234.0 L473.7 232.8 L473.9 231.7 L474.5 230.6 L475.3 229.7 L475.9 228.8 L476.3 227.8 L476.2 226.4 L475.9 224.7 L475.7 222.7 L476.0 220.9 L477.1 219.8 L478.7 219.6 L480.6 220.3 L482.5 221.5 L484.0 222.7 L485.1 223.3 L486.0 223.1 L487.0 222.1 L488.2 220.8 L489.5 219.8 L490.9 219.3 L492.3 219.5 L493.5 220.1 L494.5 221.0 L495.5 221.8 L496.6 222.6 L497.6 223.4 L498.5 224.4 L498.9 225.7 L498.7 227.2 L498.2 228.8 L497.7 230.1 L497.6 231.2 L498.3 232.0 L499.8 232.9 L501.7 234.0Z" stroke-width="1.6"/><circle cx="537" cy="234" r="21" stroke-width="2"/><circle cx="537" cy="234" r="7" stroke-width="1.8"/><path d="M551.7 234.0 L553.3 235.4 L554.1 237.0 L553.8 238.5 L552.4 239.6 L550.5 240.3 L548.6 240.7 L547.0 241.0 L546.1 241.6 L545.5 242.5 L545.1 243.7 L544.6 244.9 L543.8 245.8 L542.8 246.5 L541.7 247.0 L540.6 247.6 L539.5 248.3 L538.3 249.3 L537.0 250.1 L535.6 250.4 L534.2 249.9 L533.1 248.5 L532.4 246.6 L532.0 244.7 L531.6 243.3 L530.9 242.6 L529.7 242.7 L527.8 243.2 L525.7 243.5 L523.8 243.3 L522.5 242.4 L522.0 241.0 L522.2 239.4 L522.8 237.8 L523.3 236.4 L523.6 235.2 L523.7 234.0 L523.7 232.8 L523.9 231.7 L524.5 230.6 L525.3 229.7 L525.9 228.8 L526.3 227.8 L526.2 226.4 L525.9 224.7 L525.7 222.7 L526.0 220.9 L527.1 219.8 L528.7 219.6 L530.6 220.3 L532.5 221.5 L534.0 222.7 L535.1 223.3 L536.0 223.1 L537.0 222.1 L538.2 220.8 L539.5 219.8 L540.9 219.3 L542.3 219.5 L543.5 220.1 L544.5 221.0 L545.5 221.8 L546.6 222.6 L547.6 223.4 L548.5 224.4 L548.9 225.7 L548.7 227.2 L548.2 228.8 L547.7 230.1 L547.6 231.2 L548.3 232.0 L549.8 232.9 L551.7 234.0Z" stroke-width="1.6"/><circle cx="587" cy="234" r="21" stroke-width="2"/><circle cx="587" cy="234" r="7" stroke-width="1.8"/><path d="M601.7 234.0 L603.3 235.4 L604.1 237.0 L603.8 238.5 L602.4 239.6 L600.5 240.3 L598.6 240.7 L597.0 241.0 L596.1 241.6 L595.5 242.5 L595.1 243.7 L594.6 244.9 L593.8 245.8 L592.8 246.5 L591.7 247.0 L590.6 247.6 L589.5 248.3 L588.3 249.3 L587.0 250.1 L585.6 250.4 L584.2 249.9 L583.1 248.5 L582.4 246.6 L582.0 244.7 L581.6 243.3 L580.9 242.6 L579.7 242.7 L577.8 243.2 L575.7 243.5 L573.8 243.3 L572.5 242.4 L572.0 241.0 L572.2 239.4 L572.8 237.8 L573.3 236.4 L573.6 235.2 L573.7 234.0 L573.7 232.8 L573.9 231.7 L574.5 230.6 L575.3 229.7 L575.9 228.8 L576.3 227.8 L576.2 226.4 L575.9 224.7 L575.7 222.7 L576.0 220.9 L577.1 219.8 L578.7 219.6 L580.6 220.3 L582.5 221.5 L584.0 222.7 L585.1 223.3 L586.0 223.1 L587.0 222.1 L588.2 220.8 L589.5 219.8 L590.9 219.3 L592.3 219.5 L593.5 220.1 L594.5 221.0 L595.5 221.8 L596.6 222.6 L597.6 223.4 L598.5 224.4 L598.9 225.7 L598.7 227.2 L598.2 228.8 L597.7 230.1 L597.6 231.2 L598.3 232.0 L599.8 232.9 L601.7 234.0Z" stroke-width="1.6"/><circle cx="637" cy="234" r="21" stroke-width="2"/><circle cx="637" cy="234" r="7" stroke-width="1.8"/><path d="M651.7 234.0 L653.3 235.4 L654.1 237.0 L653.8 238.5 L652.4 239.6 L650.5 240.3 L648.6 240.7 L647.0 241.0 L646.1 241.6 L645.5 242.5 L645.1 243.7 L644.6 244.9 L643.8 245.8 L642.8 246.5 L641.7 247.0 L640.6 247.6 L639.5 248.3 L638.3 249.3 L637.0 250.1 L635.6 250.4 L634.2 249.9 L633.1 248.5 L632.4 246.6 L632.0 244.7 L631.6 243.3 L630.9 242.6 L629.7 242.7 L627.8 243.2 L625.7 243.5 L623.8 243.3 L622.5 242.4 L622.0 241.0 L622.2 239.4 L622.8 237.8 L623.3 236.4 L623.6 235.2 L623.7 234.0 L623.7 232.8 L623.9 231.7 L624.5 230.6 L625.3 229.7 L625.9 228.8 L626.3 227.8 L626.2 226.4 L625.9 224.7 L625.7 222.7 L626.0 220.9 L627.1 219.8 L628.7 219.6 L630.6 220.3 L632.5 221.5 L634.0 222.7 L635.1 223.3 L636.0 223.1 L637.0 222.1 L638.2 220.8 L639.5 219.8 L640.9 219.3 L642.3 219.5 L643.5 220.1 L644.5 221.0 L645.5 221.8 L646.6 222.6 L647.6 223.4 L648.5 224.4 L648.9 225.7 L648.7 227.2 L648.2 228.8 L647.7 230.1 L647.6 231.2 L648.3 232.0 L649.8 232.9 L651.7 234.0Z" stroke-width="1.6"/><circle cx="388" cy="290" r="21" stroke-width="2"/><circle cx="388" cy="290" r="7" stroke-width="1.8"/><path d="M402.7 290.0 L404.3 291.4 L405.1 293.0 L404.8 294.5 L403.4 295.6 L401.5 296.3 L399.6 296.7 L398.0 297.0 L397.1 297.6 L396.5 298.5 L396.1 299.7 L395.6 300.9 L394.8 301.8 L393.8 302.5 L392.7 303.0 L391.6 303.6 L390.5 304.3 L389.3 305.3 L388.0 306.1 L386.6 306.4 L385.2 305.9 L384.1 304.5 L383.4 302.6 L383.0 300.7 L382.6 299.3 L381.9 298.6 L380.7 298.7 L378.8 299.2 L376.7 299.5 L374.8 299.3 L373.5 298.4 L373.0 297.0 L373.2 295.4 L373.8 293.8 L374.3 292.4 L374.6 291.2 L374.7 290.0 L374.7 288.8 L374.9 287.7 L375.5 286.6 L376.3 285.7 L376.9 284.8 L377.3 283.8 L377.2 282.4 L376.9 280.7 L376.7 278.7 L377.0 276.9 L378.1 275.8 L379.7 275.6 L381.6 276.3 L383.5 277.5 L385.0 278.7 L386.1 279.3 L387.0 279.1 L388.0 278.1 L389.2 276.8 L390.5 275.8 L391.9 275.3 L393.3 275.5 L394.5 276.1 L395.5 277.0 L396.5 277.8 L397.6 278.6 L398.6 279.4 L399.5 280.4 L399.9 281.7 L399.7 283.2 L399.2 284.8 L398.7 286.1 L398.6 287.2 L399.3 288.0 L400.8 288.9 L402.7 290.0Z" stroke-width="1.6"/><circle cx="537" cy="290" r="21" stroke-width="2"/><circle cx="537" cy="290" r="7" stroke-width="1.8"/><path d="M551.7 290.0 L553.3 291.4 L554.1 293.0 L553.8 294.5 L552.4 295.6 L550.5 296.3 L548.6 296.7 L547.0 297.0 L546.1 297.6 L545.5 298.5 L545.1 299.7 L544.6 300.9 L543.8 301.8 L542.8 302.5 L541.7 303.0 L540.6 303.6 L539.5 304.3 L538.3 305.3 L537.0 306.1 L535.6 306.4 L534.2 305.9 L533.1 304.5 L532.4 302.6 L532.0 300.7 L531.6 299.3 L530.9 298.6 L529.7 298.7 L527.8 299.2 L525.7 299.5 L523.8 299.3 L522.5 298.4 L522.0 297.0 L522.2 295.4 L522.8 293.8 L523.3 292.4 L523.6 291.2 L523.7 290.0 L523.7 288.8 L523.9 287.7 L524.5 286.6 L525.3 285.7 L525.9 284.8 L526.3 283.8 L526.2 282.4 L525.9 280.7 L525.7 278.7 L526.0 276.9 L527.1 275.8 L528.7 275.6 L530.6 276.3 L532.5 277.5 L534.0 278.7 L535.1 279.3 L536.0 279.1 L537.0 278.1 L538.2 276.8 L539.5 275.8 L540.9 275.3 L542.3 275.5 L543.5 276.1 L544.5 277.0 L545.5 277.8 L546.6 278.6 L547.6 279.4 L548.5 280.4 L548.9 281.7 L548.7 283.2 L548.2 284.8 L547.7 286.1 L547.6 287.2 L548.3 288.0 L549.8 288.9 L551.7 290.0Z" stroke-width="1.6"/><circle cx="388" cy="336" r="21" stroke-width="2"/><circle cx="388" cy="336" r="7" stroke-width="1.8"/><path d="M402.7 336.0 L404.3 337.4 L405.1 339.0 L404.8 340.5 L403.4 341.6 L401.5 342.3 L399.6 342.7 L398.0 343.0 L397.1 343.6 L396.5 344.5 L396.1 345.7 L395.6 346.9 L394.8 347.8 L393.8 348.5 L392.7 349.0 L391.6 349.6 L390.5 350.3 L389.3 351.3 L388.0 352.1 L386.6 352.4 L385.2 351.9 L384.1 350.5 L383.4 348.6 L383.0 346.7 L382.6 345.3 L381.9 344.6 L380.7 344.7 L378.8 345.2 L376.7 345.5 L374.8 345.3 L373.5 344.4 L373.0 343.0 L373.2 341.4 L373.8 339.8 L374.3 338.4 L374.6 337.2 L374.7 336.0 L374.7 334.8 L374.9 333.7 L375.5 332.6 L376.3 331.7 L376.9 330.8 L377.3 329.8 L377.2 328.4 L376.9 326.7 L376.7 324.7 L377.0 322.9 L378.1 321.8 L379.7 321.6 L381.6 322.3 L383.5 323.5 L385.0 324.7 L386.1 325.3 L387.0 325.1 L388.0 324.1 L389.2 322.8 L390.5 321.8 L391.9 321.3 L393.3 321.5 L394.5 322.1 L395.5 323.0 L396.5 323.8 L397.6 324.6 L398.6 325.4 L399.5 326.4 L399.9 327.7 L399.7 329.2 L399.2 330.8 L398.7 332.1 L398.6 333.2 L399.3 334.0 L400.8 334.9 L402.7 336.0Z" stroke-width="1.6"/><circle cx="537" cy="336" r="21" stroke-width="2"/><circle cx="537" cy="336" r="7" stroke-width="1.8"/><path d="M551.7 336.0 L553.3 337.4 L554.1 339.0 L553.8 340.5 L552.4 341.6 L550.5 342.3 L548.6 342.7 L547.0 343.0 L546.1 343.6 L545.5 344.5 L545.1 345.7 L544.6 346.9 L543.8 347.8 L542.8 348.5 L541.7 349.0 L540.6 349.6 L539.5 350.3 L538.3 351.3 L537.0 352.1 L535.6 352.4 L534.2 351.9 L533.1 350.5 L532.4 348.6 L532.0 346.7 L531.6 345.3 L530.9 344.6 L529.7 344.7 L527.8 345.2 L525.7 345.5 L523.8 345.3 L522.5 344.4 L522.0 343.0 L522.2 341.4 L522.8 339.8 L523.3 338.4 L523.6 337.2 L523.7 336.0 L523.7 334.8 L523.9 333.7 L524.5 332.6 L525.3 331.7 L525.9 330.8 L526.3 329.8 L526.2 328.4 L525.9 326.7 L525.7 324.7 L526.0 322.9 L527.1 321.8 L528.7 321.6 L530.6 322.3 L532.5 323.5 L534.0 324.7 L535.1 325.3 L536.0 325.1 L537.0 324.1 L538.2 322.8 L539.5 321.8 L540.9 321.3 L542.3 321.5 L543.5 322.1 L544.5 323.0 L545.5 323.8 L546.6 324.6 L547.6 325.4 L548.5 326.4 L548.9 327.7 L548.7 329.2 L548.2 330.8 L547.7 332.1 L547.6 333.2 L548.3 334.0 L549.8 334.9 L551.7 336.0Z" stroke-width="1.6"/><circle cx="288" cy="386" r="21" stroke-width="2"/><circle cx="288" cy="386" r="7" stroke-width="1.8"/><path d="M302.7 386.0 L304.3 387.4 L305.1 389.0 L304.8 390.5 L303.4 391.6 L301.5 392.3 L299.6 392.7 L298.0 393.0 L297.1 393.6 L296.5 394.5 L296.1 395.7 L295.6 396.9 L294.8 397.8 L293.8 398.5 L292.7 399.0 L291.6 399.6 L290.5 400.3 L289.3 401.3 L288.0 402.1 L286.6 402.4 L285.2 401.9 L284.1 400.5 L283.4 398.6 L283.0 396.7 L282.6 395.3 L281.9 394.6 L280.7 394.7 L278.8 395.2 L276.7 395.5 L274.8 395.3 L273.5 394.4 L273.0 393.0 L273.2 391.4 L273.8 389.8 L274.3 388.4 L274.6 387.2 L274.7 386.0 L274.7 384.8 L274.9 383.7 L275.5 382.6 L276.3 381.7 L276.9 380.8 L277.3 379.8 L277.2 378.4 L276.9 376.7 L276.7 374.7 L277.0 372.9 L278.1 371.8 L279.7 371.6 L281.6 372.3 L283.5 373.5 L285.0 374.7 L286.1 375.3 L287.0 375.1 L288.0 374.1 L289.2 372.8 L290.5 371.8 L291.9 371.3 L293.3 371.5 L294.5 372.1 L295.5 373.0 L296.5 373.8 L297.6 374.6 L298.6 375.4 L299.5 376.4 L299.9 377.7 L299.7 379.2 L299.2 380.8 L298.7 382.1 L298.6 383.2 L299.3 384.0 L300.8 384.9 L302.7 386.0Z" stroke-width="1.6"/><circle cx="338" cy="386" r="21" stroke-width="2"/><circle cx="338" cy="386" r="7" stroke-width="1.8"/><path d="M352.7 386.0 L354.3 387.4 L355.1 389.0 L354.8 390.5 L353.4 391.6 L351.5 392.3 L349.6 392.7 L348.0 393.0 L347.1 393.6 L346.5 394.5 L346.1 395.7 L345.6 396.9 L344.8 397.8 L343.8 398.5 L342.7 399.0 L341.6 399.6 L340.5 400.3 L339.3 401.3 L338.0 402.1 L336.6 402.4 L335.2 401.9 L334.1 400.5 L333.4 398.6 L333.0 396.7 L332.6 395.3 L331.9 394.6 L330.7 394.7 L328.8 395.2 L326.7 395.5 L324.8 395.3 L323.5 394.4 L323.0 393.0 L323.2 391.4 L323.8 389.8 L324.3 388.4 L324.6 387.2 L324.7 386.0 L324.7 384.8 L324.9 383.7 L325.5 382.6 L326.3 381.7 L326.9 380.8 L327.3 379.8 L327.2 378.4 L326.9 376.7 L326.7 374.7 L327.0 372.9 L328.1 371.8 L329.7 371.6 L331.6 372.3 L333.5 373.5 L335.0 374.7 L336.1 375.3 L337.0 375.1 L338.0 374.1 L339.2 372.8 L340.5 371.8 L341.9 371.3 L343.3 371.5 L344.5 372.1 L345.5 373.0 L346.5 373.8 L347.6 374.6 L348.6 375.4 L349.5 376.4 L349.9 377.7 L349.7 379.2 L349.2 380.8 L348.7 382.1 L348.6 383.2 L349.3 384.0 L350.8 384.9 L352.7 386.0Z" stroke-width="1.6"/><circle cx="437" cy="386" r="21" stroke-width="2"/><circle cx="437" cy="386" r="7" stroke-width="1.8"/><path d="M451.7 386.0 L453.3 387.4 L454.1 389.0 L453.8 390.5 L452.4 391.6 L450.5 392.3 L448.6 392.7 L447.0 393.0 L446.1 393.6 L445.5 394.5 L445.1 395.7 L444.6 396.9 L443.8 397.8 L442.8 398.5 L441.7 399.0 L440.6 399.6 L439.5 400.3 L438.3 401.3 L437.0 402.1 L435.6 402.4 L434.2 401.9 L433.1 400.5 L432.4 398.6 L432.0 396.7 L431.6 395.3 L430.9 394.6 L429.7 394.7 L427.8 395.2 L425.7 395.5 L423.8 395.3 L422.5 394.4 L422.0 393.0 L422.2 391.4 L422.8 389.8 L423.3 388.4 L423.6 387.2 L423.7 386.0 L423.7 384.8 L423.9 383.7 L424.5 382.6 L425.3 381.7 L425.9 380.8 L426.3 379.8 L426.2 378.4 L425.9 376.7 L425.7 374.7 L426.0 372.9 L427.1 371.8 L428.7 371.6 L430.6 372.3 L432.5 373.5 L434.0 374.7 L435.1 375.3 L436.0 375.1 L437.0 374.1 L438.2 372.8 L439.5 371.8 L440.9 371.3 L442.3 371.5 L443.5 372.1 L444.5 373.0 L445.5 373.8 L446.6 374.6 L447.6 375.4 L448.5 376.4 L448.9 377.7 L448.7 379.2 L448.2 380.8 L447.7 382.1 L447.6 383.2 L448.3 384.0 L449.8 384.9 L451.7 386.0Z" stroke-width="1.6"/><circle cx="487" cy="386" r="21" stroke-width="2"/><circle cx="487" cy="386" r="7" stroke-width="1.8"/><path d="M501.7 386.0 L503.3 387.4 L504.1 389.0 L503.8 390.5 L502.4 391.6 L500.5 392.3 L498.6 392.7 L497.0 393.0 L496.1 393.6 L495.5 394.5 L495.1 395.7 L494.6 396.9 L493.8 397.8 L492.8 398.5 L491.7 399.0 L490.6 399.6 L489.5 400.3 L488.3 401.3 L487.0 402.1 L485.6 402.4 L484.2 401.9 L483.1 400.5 L482.4 398.6 L482.0 396.7 L481.6 395.3 L480.9 394.6 L479.7 394.7 L477.8 395.2 L475.7 395.5 L473.8 395.3 L472.5 394.4 L472.0 393.0 L472.2 391.4 L472.8 389.8 L473.3 388.4 L473.6 387.2 L473.7 386.0 L473.7 384.8 L473.9 383.7 L474.5 382.6 L475.3 381.7 L475.9 380.8 L476.3 379.8 L476.2 378.4 L475.9 376.7 L475.7 374.7 L476.0 372.9 L477.1 371.8 L478.7 371.6 L480.6 372.3 L482.5 373.5 L484.0 374.7 L485.1 375.3 L486.0 375.1 L487.0 374.1 L488.2 372.8 L489.5 371.8 L490.9 371.3 L492.3 371.5 L493.5 372.1 L494.5 373.0 L495.5 373.8 L496.6 374.6 L497.6 375.4 L498.5 376.4 L498.9 377.7 L498.7 379.2 L498.2 380.8 L497.7 382.1 L497.6 383.2 L498.3 384.0 L499.8 384.9 L501.7 386.0Z" stroke-width="1.6"/><circle cx="587" cy="386" r="21" stroke-width="2"/><circle cx="587" cy="386" r="7" stroke-width="1.8"/><path d="M601.7 386.0 L603.3 387.4 L604.1 389.0 L603.8 390.5 L602.4 391.6 L600.5 392.3 L598.6 392.7 L597.0 393.0 L596.1 393.6 L595.5 394.5 L595.1 395.7 L594.6 396.9 L593.8 397.8 L592.8 398.5 L591.7 399.0 L590.6 399.6 L589.5 400.3 L588.3 401.3 L587.0 402.1 L585.6 402.4 L584.2 401.9 L583.1 400.5 L582.4 398.6 L582.0 396.7 L581.6 395.3 L580.9 394.6 L579.7 394.7 L577.8 395.2 L575.7 395.5 L573.8 395.3 L572.5 394.4 L572.0 393.0 L572.2 391.4 L572.8 389.8 L573.3 388.4 L573.6 387.2 L573.7 386.0 L573.7 384.8 L573.9 383.7 L574.5 382.6 L575.3 381.7 L575.9 380.8 L576.3 379.8 L576.2 378.4 L575.9 376.7 L575.7 374.7 L576.0 372.9 L577.1 371.8 L578.7 371.6 L580.6 372.3 L582.5 373.5 L584.0 374.7 L585.1 375.3 L586.0 375.1 L587.0 374.1 L588.2 372.8 L589.5 371.8 L590.9 371.3 L592.3 371.5 L593.5 372.1 L594.5 373.0 L595.5 373.8 L596.6 374.6 L597.6 375.4 L598.5 376.4 L598.9 377.7 L598.7 379.2 L598.2 380.8 L597.7 382.1 L597.6 383.2 L598.3 384.0 L599.8 384.9 L601.7 386.0Z" stroke-width="1.6"/><circle cx="637" cy="386" r="21" stroke-width="2"/><circle cx="637" cy="386" r="7" stroke-width="1.8"/><path d="M651.7 386.0 L653.3 387.4 L654.1 389.0 L653.8 390.5 L652.4 391.6 L650.5 392.3 L648.6 392.7 L647.0 393.0 L646.1 393.6 L645.5 394.5 L645.1 395.7 L644.6 396.9 L643.8 397.8 L642.8 398.5 L641.7 399.0 L640.6 399.6 L639.5 400.3 L638.3 401.3 L637.0 402.1 L635.6 402.4 L634.2 401.9 L633.1 400.5 L632.4 398.6 L632.0 396.7 L631.6 395.3 L630.9 394.6 L629.7 394.7 L627.8 395.2 L625.7 395.5 L623.8 395.3 L622.5 394.4 L622.0 393.0 L622.2 391.4 L622.8 389.8 L623.3 388.4 L623.6 387.2 L623.7 386.0 L623.7 384.8 L623.9 383.7 L624.5 382.6 L625.3 381.7 L625.9 380.8 L626.3 379.8 L626.2 378.4 L625.9 376.7 L625.7 374.7 L626.0 372.9 L627.1 371.8 L628.7 371.6 L630.6 372.3 L632.5 373.5 L634.0 374.7 L635.1 375.3 L636.0 375.1 L637.0 374.1 L638.2 372.8 L639.5 371.8 L640.9 371.3 L642.3 371.5 L643.5 372.1 L644.5 373.0 L645.5 373.8 L646.6 374.6 L647.6 375.4 L648.5 376.4 L648.9 377.7 L648.7 379.2 L648.2 380.8 L647.7 382.1 L647.6 383.2 L648.3 384.0 L649.8 384.9 L651.7 386.0Z" stroke-width="1.6"/><circle cx="288" cy="434" r="21" stroke-width="2"/><circle cx="288" cy="434" r="7" stroke-width="1.8"/><path d="M302.7 434.0 L304.3 435.4 L305.1 437.0 L304.8 438.5 L303.4 439.6 L301.5 440.3 L299.6 440.7 L298.0 441.0 L297.1 441.6 L296.5 442.5 L296.1 443.7 L295.6 444.9 L294.8 445.8 L293.8 446.5 L292.7 447.0 L291.6 447.6 L290.5 448.3 L289.3 449.3 L288.0 450.1 L286.6 450.4 L285.2 449.9 L284.1 448.5 L283.4 446.6 L283.0 444.7 L282.6 443.3 L281.9 442.6 L280.7 442.7 L278.8 443.2 L276.7 443.5 L274.8 443.3 L273.5 442.4 L273.0 441.0 L273.2 439.4 L273.8 437.8 L274.3 436.4 L274.6 435.2 L274.7 434.0 L274.7 432.8 L274.9 431.7 L275.5 430.6 L276.3 429.7 L276.9 428.8 L277.3 427.8 L277.2 426.4 L276.9 424.7 L276.7 422.7 L277.0 420.9 L278.1 419.8 L279.7 419.6 L281.6 420.3 L283.5 421.5 L285.0 422.7 L286.1 423.3 L287.0 423.1 L288.0 422.1 L289.2 420.8 L290.5 419.8 L291.9 419.3 L293.3 419.5 L294.5 420.1 L295.5 421.0 L296.5 421.8 L297.6 422.6 L298.6 423.4 L299.5 424.4 L299.9 425.7 L299.7 427.2 L299.2 428.8 L298.7 430.1 L298.6 431.2 L299.3 432.0 L300.8 432.9 L302.7 434.0Z" stroke-width="1.6"/><circle cx="440" cy="434" r="21" stroke-width="2"/><circle cx="440" cy="434" r="7" stroke-width="1.8"/><path d="M454.7 434.0 L456.3 435.4 L457.1 437.0 L456.8 438.5 L455.4 439.6 L453.5 440.3 L451.6 440.7 L450.0 441.0 L449.1 441.6 L448.5 442.5 L448.1 443.7 L447.6 444.9 L446.8 445.8 L445.8 446.5 L444.7 447.0 L443.6 447.6 L442.5 448.3 L441.3 449.3 L440.0 450.1 L438.6 450.4 L437.2 449.9 L436.1 448.5 L435.4 446.6 L435.0 444.7 L434.6 443.3 L433.9 442.6 L432.7 442.7 L430.8 443.2 L428.7 443.5 L426.8 443.3 L425.5 442.4 L425.0 441.0 L425.2 439.4 L425.8 437.8 L426.3 436.4 L426.6 435.2 L426.7 434.0 L426.7 432.8 L426.9 431.7 L427.5 430.6 L428.3 429.7 L428.9 428.8 L429.3 427.8 L429.2 426.4 L428.9 424.7 L428.7 422.7 L429.0 420.9 L430.1 419.8 L431.7 419.6 L433.6 420.3 L435.5 421.5 L437.0 422.7 L438.1 423.3 L439.0 423.1 L440.0 422.1 L441.2 420.8 L442.5 419.8 L443.9 419.3 L445.3 419.5 L446.5 420.1 L447.5 421.0 L448.5 421.8 L449.6 422.6 L450.6 423.4 L451.5 424.4 L451.9 425.7 L451.7 427.2 L451.2 428.8 L450.7 430.1 L450.6 431.2 L451.3 432.0 L452.8 432.9 L454.7 434.0Z" stroke-width="1.6"/><circle cx="590" cy="434" r="21" stroke-width="2"/><circle cx="590" cy="434" r="7" stroke-width="1.8"/><path d="M604.7 434.0 L606.3 435.4 L607.1 437.0 L606.8 438.5 L605.4 439.6 L603.5 440.3 L601.6 440.7 L600.0 441.0 L599.1 441.6 L598.5 442.5 L598.1 443.7 L597.6 444.9 L596.8 445.8 L595.8 446.5 L594.7 447.0 L593.6 447.6 L592.5 448.3 L591.3 449.3 L590.0 450.1 L588.6 450.4 L587.2 449.9 L586.1 448.5 L585.4 446.6 L585.0 444.7 L584.6 443.3 L583.9 442.6 L582.7 442.7 L580.8 443.2 L578.7 443.5 L576.8 443.3 L575.5 442.4 L575.0 441.0 L575.2 439.4 L575.8 437.8 L576.3 436.4 L576.6 435.2 L576.7 434.0 L576.7 432.8 L576.9 431.7 L577.5 430.6 L578.3 429.7 L578.9 428.8 L579.3 427.8 L579.2 426.4 L578.9 424.7 L578.7 422.7 L579.0 420.9 L580.1 419.8 L581.7 419.6 L583.6 420.3 L585.5 421.5 L587.0 422.7 L588.1 423.3 L589.0 423.1 L590.0 422.1 L591.2 420.8 L592.5 419.8 L593.9 419.3 L595.3 419.5 L596.5 420.1 L597.5 421.0 L598.5 421.8 L599.6 422.6 L600.6 423.4 L601.5 424.4 L601.9 425.7 L601.7 427.2 L601.2 428.8 L600.7 430.1 L600.6 431.2 L601.3 432.0 L602.8 432.9 L604.7 434.0Z" stroke-width="1.6"/><circle cx="640" cy="434" r="21" stroke-width="2"/><circle cx="640" cy="434" r="7" stroke-width="1.8"/><path d="M654.7 434.0 L656.3 435.4 L657.1 437.0 L656.8 438.5 L655.4 439.6 L653.5 440.3 L651.6 440.7 L650.0 441.0 L649.1 441.6 L648.5 442.5 L648.1 443.7 L647.6 444.9 L646.8 445.8 L645.8 446.5 L644.7 447.0 L643.6 447.6 L642.5 448.3 L641.3 449.3 L640.0 450.1 L638.6 450.4 L637.2 449.9 L636.1 448.5 L635.4 446.6 L635.0 444.7 L634.6 443.3 L633.9 442.6 L632.7 442.7 L630.8 443.2 L628.7 443.5 L626.8 443.3 L625.5 442.4 L625.0 441.0 L625.2 439.4 L625.8 437.8 L626.3 436.4 L626.6 435.2 L626.7 434.0 L626.7 432.8 L626.9 431.7 L627.5 430.6 L628.3 429.7 L628.9 428.8 L629.3 427.8 L629.2 426.4 L628.9 424.7 L628.7 422.7 L629.0 420.9 L630.1 419.8 L631.7 419.6 L633.6 420.3 L635.5 421.5 L637.0 422.7 L638.1 423.3 L639.0 423.1 L640.0 422.1 L641.2 420.8 L642.5 419.8 L643.9 419.3 L645.3 419.5 L646.5 420.1 L647.5 421.0 L648.5 421.8 L649.6 422.6 L650.6 423.4 L651.5 424.4 L651.9 425.7 L651.7 427.2 L651.2 428.8 L650.7 430.1 L650.6 431.2 L651.3 432.0 L652.8 432.9 L654.7 434.0Z" stroke-width="1.6"/><circle cx="288" cy="482" r="21" stroke-width="2"/><circle cx="288" cy="482" r="7" stroke-width="1.8"/><path d="M302.7 482.0 L304.3 483.4 L305.1 485.0 L304.8 486.5 L303.4 487.6 L301.5 488.3 L299.6 488.7 L298.0 489.0 L297.1 489.6 L296.5 490.5 L296.1 491.7 L295.6 492.9 L294.8 493.8 L293.8 494.5 L292.7 495.0 L291.6 495.6 L290.5 496.3 L289.3 497.3 L288.0 498.1 L286.6 498.4 L285.2 497.9 L284.1 496.5 L283.4 494.6 L283.0 492.7 L282.6 491.3 L281.9 490.6 L280.7 490.7 L278.8 491.2 L276.7 491.5 L274.8 491.3 L273.5 490.4 L273.0 489.0 L273.2 487.4 L273.8 485.8 L274.3 484.4 L274.6 483.2 L274.7 482.0 L274.7 480.8 L274.9 479.7 L275.5 478.6 L276.3 477.7 L276.9 476.8 L277.3 475.8 L277.2 474.4 L276.9 472.7 L276.7 470.7 L277.0 468.9 L278.1 467.8 L279.7 467.6 L281.6 468.3 L283.5 469.5 L285.0 470.7 L286.1 471.3 L287.0 471.1 L288.0 470.1 L289.2 468.8 L290.5 467.8 L291.9 467.3 L293.3 467.5 L294.5 468.1 L295.5 469.0 L296.5 469.8 L297.6 470.6 L298.6 471.4 L299.5 472.4 L299.9 473.7 L299.7 475.2 L299.2 476.8 L298.7 478.1 L298.6 479.2 L299.3 480.0 L300.8 480.9 L302.7 482.0Z" stroke-width="1.6"/><circle cx="440" cy="482" r="21" stroke-width="2"/><circle cx="440" cy="482" r="7" stroke-width="1.8"/><path d="M454.7 482.0 L456.3 483.4 L457.1 485.0 L456.8 486.5 L455.4 487.6 L453.5 488.3 L451.6 488.7 L450.0 489.0 L449.1 489.6 L448.5 490.5 L448.1 491.7 L447.6 492.9 L446.8 493.8 L445.8 494.5 L444.7 495.0 L443.6 495.6 L442.5 496.3 L441.3 497.3 L440.0 498.1 L438.6 498.4 L437.2 497.9 L436.1 496.5 L435.4 494.6 L435.0 492.7 L434.6 491.3 L433.9 490.6 L432.7 490.7 L430.8 491.2 L428.7 491.5 L426.8 491.3 L425.5 490.4 L425.0 489.0 L425.2 487.4 L425.8 485.8 L426.3 484.4 L426.6 483.2 L426.7 482.0 L426.7 480.8 L426.9 479.7 L427.5 478.6 L428.3 477.7 L428.9 476.8 L429.3 475.8 L429.2 474.4 L428.9 472.7 L428.7 470.7 L429.0 468.9 L430.1 467.8 L431.7 467.6 L433.6 468.3 L435.5 469.5 L437.0 470.7 L438.1 471.3 L439.0 471.1 L440.0 470.1 L441.2 468.8 L442.5 467.8 L443.9 467.3 L445.3 467.5 L446.5 468.1 L447.5 469.0 L448.5 469.8 L449.6 470.6 L450.6 471.4 L451.5 472.4 L451.9 473.7 L451.7 475.2 L451.2 476.8 L450.7 478.1 L450.6 479.2 L451.3 480.0 L452.8 480.9 L454.7 482.0Z" stroke-width="1.6"/><circle cx="590" cy="482" r="21" stroke-width="2"/><circle cx="590" cy="482" r="7" stroke-width="1.8"/><path d="M604.7 482.0 L606.3 483.4 L607.1 485.0 L606.8 486.5 L605.4 487.6 L603.5 488.3 L601.6 488.7 L600.0 489.0 L599.1 489.6 L598.5 490.5 L598.1 491.7 L597.6 492.9 L596.8 493.8 L595.8 494.5 L594.7 495.0 L593.6 495.6 L592.5 496.3 L591.3 497.3 L590.0 498.1 L588.6 498.4 L587.2 497.9 L586.1 496.5 L585.4 494.6 L585.0 492.7 L584.6 491.3 L583.9 490.6 L582.7 490.7 L580.8 491.2 L578.7 491.5 L576.8 491.3 L575.5 490.4 L575.0 489.0 L575.2 487.4 L575.8 485.8 L576.3 484.4 L576.6 483.2 L576.7 482.0 L576.7 480.8 L576.9 479.7 L577.5 478.6 L578.3 477.7 L578.9 476.8 L579.3 475.8 L579.2 474.4 L578.9 472.7 L578.7 470.7 L579.0 468.9 L580.1 467.8 L581.7 467.6 L583.6 468.3 L585.5 469.5 L587.0 470.7 L588.1 471.3 L589.0 471.1 L590.0 470.1 L591.2 468.8 L592.5 467.8 L593.9 467.3 L595.3 467.5 L596.5 468.1 L597.5 469.0 L598.5 469.8 L599.6 470.6 L600.6 471.4 L601.5 472.4 L601.9 473.7 L601.7 475.2 L601.2 476.8 L600.7 478.1 L600.6 479.2 L601.3 480.0 L602.8 480.9 L604.7 482.0Z" stroke-width="1.6"/><circle cx="640" cy="482" r="21" stroke-width="2"/><circle cx="640" cy="482" r="7" stroke-width="1.8"/><path d="M654.7 482.0 L656.3 483.4 L657.1 485.0 L656.8 486.5 L655.4 487.6 L653.5 488.3 L651.6 488.7 L650.0 489.0 L649.1 489.6 L648.5 490.5 L648.1 491.7 L647.6 492.9 L646.8 493.8 L645.8 494.5 L644.7 495.0 L643.6 495.6 L642.5 496.3 L641.3 497.3 L640.0 498.1 L638.6 498.4 L637.2 497.9 L636.1 496.5 L635.4 494.6 L635.0 492.7 L634.6 491.3 L633.9 490.6 L632.7 490.7 L630.8 491.2 L628.7 491.5 L626.8 491.3 L625.5 490.4 L625.0 489.0 L625.2 487.4 L625.8 485.8 L626.3 484.4 L626.6 483.2 L626.7 482.0 L626.7 480.8 L626.9 479.7 L627.5 478.6 L628.3 477.7 L628.9 476.8 L629.3 475.8 L629.2 474.4 L628.9 472.7 L628.7 470.7 L629.0 468.9 L630.1 467.8 L631.7 467.6 L633.6 468.3 L635.5 469.5 L637.0 470.7 L638.1 471.3 L639.0 471.1 L640.0 470.1 L641.2 468.8 L642.5 467.8 L643.9 467.3 L645.3 467.5 L646.5 468.1 L647.5 469.0 L648.5 469.8 L649.6 470.6 L650.6 471.4 L651.5 472.4 L651.9 473.7 L651.7 475.2 L651.2 476.8 L650.7 478.1 L650.6 479.2 L651.3 480.0 L652.8 480.9 L654.7 482.0Z" stroke-width="1.6"/></g><circle cx="317" cy="206.5" r="31.6" fill="none" stroke="#fff" stroke-width="8"/><circle cx="653" cy="497" r="37.5" fill="none" stroke="#fff" stroke-width="9.5"/><path d="M355 215.7H472.2" stroke="#fff" stroke-width="2.4"/><path d="M533.5 491H604.4M489.5 496.8H604.4" stroke="#fff" stroke-width="2.4"/><g fill="none" stroke="#fff" stroke-width="9" stroke-linecap="round" stroke-linejoin="round">
<path d="M350.5 337C356 331 366 327.8 378 328C396 328.5 403.5 341 403.5 356C403 373 391 386 372 386.5C365 386.7 360 386 356 384.5" stroke-width="8.8"/>
<path d="M366.5 342C365 356 362.5 371 360.5 384" stroke-width="10.5"/>
<ellipse cx="429" cy="372.6" rx="10.3" ry="13.6" stroke-width="9.6"/>
<path d="M440 371C445 371.5 449 369 452 364" stroke-width="7"/>
<path d="M452 359C452 370 451.5 379 451 386" stroke-width="9"/>
<path d="M452 370C455 361 460 357.5 466 357.5C473 357.5 476.5 362 477 370C477.5 377 478 382 478.5 385.5" stroke-width="9"/>
<path d="M494.5 358.5C494 370 493 386 503 387C511.5 388 513 376 513.5 358.5" stroke-width="9"/>
<path d="M513.5 366C513.5 376 514 384 519 386C523 387 527 386 531 384" stroke-width="8"/>
<path d="M547 327.5C540 334 535 350 533.5 366C532 381 534 388 541 387.5C549 387 556 381 560.5 376.5" stroke-width="9.5"/>
<path d="M547 327.5C553 330 551.5 342 544 356" stroke-width="6"/>
<path d="M521 358.2L555 357.6" stroke-width="8"/>
</g></svg>
</div>
<div class="t" style="left:423px;top:323.5px;font-size:8.5px;font-weight:bold;color:#3a1624;letter-spacing:4.9px">est.2000</div>
<div class="t" style="left:409px;top:405px;font-size:15.5px;color:#2a0e17;letter-spacing:8.4px;-webkit-text-stroke:0.35px #2a0e17">factory</div>
<div class="t" style="left:382px;top:460px;font-size:9px;color:#fff;opacity:0.6;letter-spacing:4.57px">eat more hole foods!</div>
<svg style="left:340px;top:205px" width="100" height="50" viewBox="340 205 100 50"><path d="M357 219.3H428" stroke="#f3d6ea" stroke-width="1.2"/><path d="M357 221.2H428" stroke="#3b6fd0" stroke-width="1.9"/><path d="M391.8 225V240" stroke="#4a5a9a" stroke-width="1.2"/><circle cx="357.1" cy="220.7" r="4.8" fill="#2f7fd8" stroke="#fff" stroke-width="1.4"/><circle cx="391.8" cy="220.7" r="4.8" fill="#2f7fd8" stroke="#fff" stroke-width="1.4"/><circle cx="427.8" cy="220.7" r="4.8" fill="#2f7fd8" stroke="#fff" stroke-width="1.4"/><circle cx="391.8" cy="243.9" r="4.3" fill="#fff" stroke="#4a5a9a" stroke-width="1.1"/></svg>
<div class="a" style="left:250px;top:737px;width:474px;height:31px;background:#d72e64;border-top:1px solid #b02a55"></div>
<svg style="left:699px;top:746px" width="16" height="16" viewBox="0 0 16 16"><circle cx="8" cy="8.1" r="6.3" fill="none" stroke="#fff" stroke-width="1.3"/><path d="M5.3 5.4 10.7 10.8M10.7 5.4 5.3 10.8" stroke="#fff" stroke-width="1.7"/></svg>
<div class="t" style="left:314.5px;top:746px;font-size:12px;color:#fff;font-weight:bold;font-style:italic;letter-spacing:-0.39px">You are now running Gravit Designer 2019-1.9. <span style="text-decoration:underline">See release notes</span></div>

<!-- RIGHT PANEL -->
<div class="a" style="left:724px;top:73px;width:1px;height:695px;background:#e0e0e0"></div>
<div class="a" style="left:725px;top:73px;width:299px;height:695px;background:#fff"></div>
<div class="a" style="left:725px;top:104px;width:299px;height:1px;background:#d9d9d9"></div>
<svg style="left:725px;top:73px" width="299" height="30" viewBox="725 73 299 30"><rect x="735" y="82.6" width="3.9" height="12" fill="#c4c4c4"/><rect x="741" y="80" width="1.2" height="18" fill="#d4d4d4"/><rect x="745" y="80" width="1.2" height="18" fill="#d4d4d4"/><rect x="749.2" y="85" width="3.6" height="7.4" fill="#c4c4c4"/><rect x="774" y="80" width="7.8" height="3.6" fill="#c4c4c4"/><rect x="769" y="86.5" width="17.5" height="1.2" fill="#d4d4d4"/><rect x="769" y="90.1" width="17.5" height="1.2" fill="#d4d4d4"/><rect x="771.9" y="94.3" width="12" height="3.4" fill="#c4c4c4"/><rect x="800" y="84" width="1" height="12" fill="#e0e0e0"/><rect x="815.2" y="80" width="1.3" height="18" fill="#b0b0b0"/><rect x="818.7" y="84.2" width="8.1" height="3.6" fill="#6e6e6e"/><rect x="818.7" y="90.2" width="12" height="3.7" fill="#6e6e6e"/><rect x="857" y="80" width="1.3" height="18" fill="#b0b0b0"/><rect x="852" y="84.2" width="11.8" height="3.6" fill="#6e6e6e"/><rect x="854.1" y="90.2" width="7.8" height="3.7" fill="#6e6e6e"/><rect x="888" y="84.2" width="8" height="3.6" fill="#6e6e6e"/><rect x="884" y="90.2" width="12" height="3.7" fill="#6e6e6e"/><rect x="898.6" y="80" width="1.3" height="18" fill="#b0b0b0"/><rect x="914" y="79" width="1" height="21" fill="#e0e0e0"/><rect x="929" y="80.2" width="18" height="1.3" fill="#b0b0b0"/><rect x="932.9" y="84" width="4.1" height="11.8" fill="#6e6e6e"/><rect x="939.2" y="84" width="3.6" height="7.7" fill="#6e6e6e"/><rect x="961.8" y="88.3" width="18" height="1.3" fill="#b0b0b0"/><rect x="966" y="82.9" width="3.9" height="11.8" fill="#6e6e6e"/><rect x="972.1" y="85" width="3.7" height="7.5" fill="#6e6e6e"/><rect x="1000.2" y="82.1" width="3.4" height="11.8" fill="#6e6e6e"/><rect x="1006.2" y="86" width="3.7" height="7.9" fill="#6e6e6e"/><rect x="996.3" y="96.2" width="17.5" height="1.3" fill="#b0b0b0"/></svg>
<div class="t" style="left:732.0px;top:122.4px;font-size:11.5px;color:#444;letter-spacing:-0.15px">Position</div>
<div class="t" style="left:732.0px;top:153.3px;font-size:11.5px;color:#444;letter-spacing:-0.15px">Size</div>
<div class="t" style="left:732.0px;top:184.4px;font-size:11.5px;color:#444;letter-spacing:-0.15px">Angle</div>
<div class="t" style="left:732.0px;top:215.3px;font-size:11.5px;color:#444;letter-spacing:-0.15px">Anchors</div>
<div class="box" style="left:802.3px;top:115.4px;width:89.3px;height:23.0px;"></div>
<div class="box" style="left:922.5px;top:115.4px;width:94.0px;height:23.0px;"></div>
<div class="box" style="left:802.3px;top:146.3px;width:89.3px;height:23.2px;"></div>
<div class="box" style="left:922.5px;top:146.3px;width:94.0px;height:23.2px;"></div>
<div class="box" style="left:802.3px;top:177.4px;width:89.3px;height:23.2px;"></div>
<div class="box" style="left:922.5px;top:177.4px;width:94.0px;height:23.2px;"></div>
<div class="box" style="left:802.3px;top:208.3px;width:89.3px;height:23.3px;"></div>
<div class="box" style="left:922.5px;top:208.3px;width:94.0px;height:23.3px;"></div>
<div class="t" style="left:808.5px;top:123.0px;font-size:10.5px;color:#888;">X</div>
<div class="t" style="left:823.4px;top:122.5px;font-size:11.5px;color:#3e3e3e;">249.2</div>
<div class="t" style="left:929.0px;top:123.0px;font-size:10.5px;color:#888;">Y</div>
<div class="t" style="left:943.8px;top:122.5px;font-size:11.5px;color:#3e3e3e;">37.1</div>
<div class="t" style="left:808.0px;top:154.0px;font-size:10.5px;color:#888;">W</div>
<div class="t" style="left:823.4px;top:153.5px;font-size:11.5px;color:#3e3e3e;">181.2</div>
<div class="t" style="left:929.0px;top:154.0px;font-size:10.5px;color:#888;">H</div>
<div class="t" style="left:943.8px;top:153.5px;font-size:11.5px;color:#3e3e3e;">6.2</div>
<div class="t" style="left:809.0px;top:185.0px;font-size:10.5px;color:#888;">R</div>
<div class="t" style="left:823.4px;top:184.5px;font-size:11.5px;color:#3e3e3e;">180°</div>
<div class="t" style="left:945.5px;top:184.5px;font-size:11.5px;color:#444;letter-spacing:-0.1px">Transform</div>
<svg style="left:901px;top:150px" width="12" height="15" viewBox="0 0 12 15"><path d="M2 6.2V4.8a4 3.5 0 0 1 8 0v1.4M2 8.8v1.4a4 3.5 0 0 0 8 0V8.8" fill="none" stroke="#777" stroke-width="1.3"/></svg>
<svg style="left:805px;top:210px" width="85" height="20" viewBox="805 210 85 20"><rect x="812.5" y="215" width="2.5" height="10.5" fill="#6e6e6e"/><path d="M815 220h9" stroke="#6e6e6e" stroke-width="2" stroke-dasharray="1.6 0.8"/><path d="M840 220h15" stroke="#6e6e6e" stroke-width="2" stroke-dasharray="1.6 0.8"/><rect x="845.7" y="215" width="2.5" height="10.5" fill="#6e6e6e"/><path d="M870 220h9" stroke="#6e6e6e" stroke-width="2" stroke-dasharray="1.6 0.8"/><rect x="878.9" y="215" width="2.5" height="10.5" fill="#6e6e6e"/></svg><svg style="left:925px;top:210px" width="90" height="20" viewBox="925 210 90 20"><rect x="933.7" y="214.8" width="10.7" height="2.4" fill="#6e6e6e"/><path d="M939 217.5v9" stroke="#6e6e6e" stroke-width="2" stroke-dasharray="1.6 0.8"/><path d="M970 214v13" stroke="#6e6e6e" stroke-width="2" stroke-dasharray="1.6 0.8"/><rect x="964.6" y="219.4" width="10.7" height="2.4" fill="#6e6e6e"/><path d="M1000.8 214v10" stroke="#6e6e6e" stroke-width="2" stroke-dasharray="1.6 0.8"/><rect x="995.2" y="223.8" width="11.2" height="2.4" fill="#6e6e6e"/></svg>
<div class="a" style="left:725px;top:242px;width:299px;height:1px;background:#d9d9d9"></div>
<div class="hdr" style="left:725px;top:242.0px;width:299px;height:33.0px;border-top:1px solid #d9d9d9;border-bottom:1px solid #d9d9d9"></div>
<div class="t" style="left:730.0px;top:253.1px;font-size:12.2px;color:#555;letter-spacing:-0.1px">Appearance</div>
<div class="dd" style="left:804.0px;top:257.0px;border-top-color:#666;border-top-width:4.5px"></div>
<div class="t" style="left:735.0px;top:291.8px;font-size:11.5px;color:#444;">Corner</div>
<div class="a" style="left:810px;top:295.5px;width:121px;height:4px;background:#a3a3a3;border-radius:2px"></div>
<div class="a" style="left:804px;top:291.5px;width:11.5px;height:11.5px;background:#fff;border:1px solid #cfcfcf;border-radius:50%"></div>
<div class="box" style="left:941.0px;top:285.3px;width:33.6px;height:23.4px;"></div>
<div class="t" style="left:947.0px;top:291.0px;font-size:11.5px;color:#3e3e3e;">0</div>
<div class="box" style="left:979.6px;top:285.3px;width:33.9px;height:23.4px;"></div>
<svg style="left:986px;top:288px" width="20" height="18" viewBox="0 0 20 18"><g fill="none" stroke="#6e6e6e" stroke-width="1.1"><path d="M3 4.3H13.5M3 8.7H6.3M9.7 8.7H16.5M3 13.2H13.5"/><circle cx="15.2" cy="4.3" r="1.7"/><circle cx="8" cy="8.7" r="1.7"/><circle cx="15.2" cy="13.2" r="1.7"/></g></svg>
<div class="a" style="left:736px;top:316px;width:280px;height:1px;background:#e6e6e6"></div>
<div class="t" style="left:735.0px;top:330.8px;font-size:11.5px;color:#444;">Opacity</div>
<div class="a" style="left:804px;top:333px;width:156px;height:6px;border-radius:3px;background:linear-gradient(90deg,rgba(210,55,105,0) 0%,rgba(210,55,105,0.35) 35%,#d03868 100%)"></div>
<div class="a" style="left:804px;top:333px;width:60px;height:6px;border-radius:3px;background:repeating-linear-gradient(90deg,rgba(0,0,0,0.06) 0 2px,transparent 2px 4px)"></div>
<div class="a" style="left:955px;top:331px;width:10px;height:10px;border-radius:50%;background:#cc3366;border:2px solid #fff;box-shadow:0 0 1px rgba(0,0,0,.3)"></div>
<div class="box" style="left:974.6px;top:324.7px;width:38.9px;height:22.8px;"></div>
<div class="t" style="left:979.5px;top:330.5px;font-size:11.5px;color:#3e3e3e;letter-spacing:-0.2px">100%</div>
<div class="t" style="left:735.0px;top:361.8px;font-size:11.5px;color:#444;">Blending</div>
<div class="box" style="left:805.5px;top:355.5px;width:207.8px;height:22.9px;"></div>
<div class="t" style="left:816.4px;top:362.4px;font-size:11.5px;color:#3e3e3e;">Normal</div>
<div class="dd" style="left:998px;top:365px;border-top-color:#b5b5b5;border-left-width:4px;border-right-width:4px"></div>
<div class="t" style="left:735.0px;top:392.8px;font-size:11.5px;color:#444;">Style</div>
<div class="box" style="left:805.5px;top:386.0px;width:152.0px;height:23.0px;"></div>
<div class="t" style="left:816.4px;top:392.5px;font-size:11.5px;color:#3e3e3e;letter-spacing:-0.2px">No shared style</div>
<div class="a" style="left:908.3px;top:393.3px;width:19.7px;height:9.4px;background:#eef59a;border-radius:2px"></div>
<div class="t" style="left:910.0px;top:394.5px;font-size:8.0px;color:#8e9040;letter-spacing:0.2px">PRO</div>
<div class="dd" style="left:942px;top:396px;border-top-color:#b5b5b5"></div>
<div class="box" style="left:963.7px;top:386.0px;width:49.8px;height:23.0px;border-color:#e6e6e6"></div>
<div class="t" style="left:977.0px;top:392.5px;font-size:11.5px;color:#b8b8b8;">Sync</div>
<div class="hdr" style="left:725px;top:420.4px;width:299px;height:33.0px;border-top:1px solid #d9d9d9;border-bottom:1px solid #d9d9d9"></div>
<div class="t" style="left:730.0px;top:431.5px;font-size:12.2px;color:#555;letter-spacing:-0.1px">Fills</div>
<div class="dd" style="left:762.0px;top:435.4px;border-top-color:#666;border-top-width:4.5px"></div>
<svg style="left:950px;top:430.2px" width="18" height="16" viewBox="0 0 18 16"><g fill="none" stroke="#6e6e6e" stroke-width="1.1"><path d="M1 2.3H11.9M1 7.3H3.8M7.8 7.3H16M1 12.3H11.9"/><circle cx="13.7" cy="2.3" r="1.8"/><circle cx="5.8" cy="7.3" r="1.8"/><circle cx="13.7" cy="12.3" r="1.8"/></g></svg>
<svg style="left:976px;top:429.9px" width="14" height="16" viewBox="0 0 14 16"><path d="M0.5 2.5H13.5" stroke="#6e6e6e" stroke-width="1.8"/><path d="M4.5 1.3H9.5" stroke="#6e6e6e" stroke-width="1.6"/><path d="M1.8 3.8H12.2L11.4 15.2H2.6z" fill="#6e6e6e"/><path d="M5.3 5.6V13.6M8.7 5.6V13.6" stroke="#efefef" stroke-width="1.2"/></svg>
<svg style="left:999px;top:428.9px" width="16" height="16" viewBox="0 0 16 16"><circle cx="8" cy="8" r="6.6" fill="none" stroke="#6e6e6e" stroke-width="1.3"/><path d="M8 4.4V11.6M4.4 8H11.6" stroke="#6e6e6e" stroke-width="1.6"/></svg>
<div class="a" style="left:735.3px;top:456.4px;width:24.4px;height:24.4px;border-radius:50%;border:2px solid #e2e2e2;background:#fff"></div>
<div class="a" style="left:752.3px;top:467.6px;width:16.6px;height:16.6px;border-radius:50%;border:2px solid #e2e2e2;background:#fff"></div>
<svg style="left:755px;top:470.1px" width="12" height="12" viewBox="0 0 12 12"><path d="M1.6 9.4 6.6 4.4" stroke="#333" stroke-width="2.7" stroke-linecap="round"/><path d="M2.2 8.8 6 5" stroke="#fff" stroke-width="0.9" stroke-linecap="round"/><circle cx="8.4" cy="2.7" r="1.7" fill="#333"/><path d="M5.6 2.6 8.4 5.4" stroke="#333" stroke-width="1.4"/></svg>
<div class="box" style="left:775.3px;top:459.4px;width:172.3px;height:23.3px;"></div>
<div class="t" style="left:786.5px;top:466.4px;font-size:11.5px;color:#3e3e3e;">Normal</div>
<div class="dd" style="left:931px;top:469px;border-top-color:#b5b5b5"></div>
<div class="box" style="left:953.7px;top:459.6px;width:38.9px;height:23.1px;"></div>
<div class="t" style="left:958.5px;top:465.5px;font-size:11.5px;color:#3e3e3e;letter-spacing:-0.2px">100%</div>
<svg style="left:998px;top:465.0px" width="16" height="12" viewBox="0 0 16 12"><path d="M1.2 6C3 2.8 5.3 1.5 8 1.5S13 2.8 14.8 6C13 9.2 10.7 10.5 8 10.5S3 9.2 1.2 6z" fill="#6e6e6e"/><circle cx="8" cy="6" r="2.6" fill="#fff"/><circle cx="8" cy="6" r="1.5" fill="#6e6e6e"/></svg>
<div class="hdr" style="left:725px;top:488.1px;width:299px;height:33.3px;border-top:1px solid #d9d9d9;border-bottom:1px solid #d9d9d9"></div>
<div class="t" style="left:730.0px;top:499.2px;font-size:12.2px;color:#555;letter-spacing:-0.1px">Borders</div>
<div class="dd" style="left:782.0px;top:503.1px;border-top-color:#666;border-top-width:4.5px"></div>
<svg style="left:950px;top:497.9px" width="18" height="16" viewBox="0 0 18 16"><g fill="none" stroke="#6e6e6e" stroke-width="1.1"><path d="M1 2.3H11.9M1 7.3H3.8M7.8 7.3H16M1 12.3H11.9"/><circle cx="13.7" cy="2.3" r="1.8"/><circle cx="5.8" cy="7.3" r="1.8"/><circle cx="13.7" cy="12.3" r="1.8"/></g></svg>
<svg style="left:976px;top:497.6px" width="14" height="16" viewBox="0 0 14 16"><path d="M0.5 2.5H13.5" stroke="#6e6e6e" stroke-width="1.8"/><path d="M4.5 1.3H9.5" stroke="#6e6e6e" stroke-width="1.6"/><path d="M1.8 3.8H12.2L11.4 15.2H2.6z" fill="#6e6e6e"/><path d="M5.3 5.6V13.6M8.7 5.6V13.6" stroke="#efefef" stroke-width="1.2"/></svg>
<svg style="left:999px;top:496.6px" width="16" height="16" viewBox="0 0 16 16"><circle cx="8" cy="8" r="6.6" fill="none" stroke="#6e6e6e" stroke-width="1.3"/><path d="M8 4.4V11.6M4.4 8H11.6" stroke="#6e6e6e" stroke-width="1.6"/></svg>
<div class="a" style="left:735.3px;top:524.4px;width:24.4px;height:24.4px;border-radius:50%;border:2px solid #e2e2e2;background:#fff"></div>
<div class="a" style="left:752.3px;top:535.6px;width:16.6px;height:16.6px;border-radius:50%;border:2px solid #e2e2e2;background:#fff"></div>
<svg style="left:755px;top:538.1px" width="12" height="12" viewBox="0 0 12 12"><path d="M1.6 9.4 6.6 4.4" stroke="#333" stroke-width="2.7" stroke-linecap="round"/><path d="M2.2 8.8 6 5" stroke="#fff" stroke-width="0.9" stroke-linecap="round"/><circle cx="8.4" cy="2.7" r="1.7" fill="#333"/><path d="M5.6 2.6 8.4 5.4" stroke="#333" stroke-width="1.4"/></svg>
<div class="box" style="left:775.3px;top:527.5px;width:34.3px;height:23.2px;"></div>
<div class="t" style="left:781.0px;top:533.5px;font-size:11.5px;color:#3e3e3e;">1.4</div>
<div class="box" style="left:815.0px;top:527.5px;width:132.6px;height:23.2px;"></div>
<div class="t" style="left:826.0px;top:534.4px;font-size:11.5px;color:#3e3e3e;">Normal</div>
<div class="dd" style="left:931px;top:537px;border-top-color:#b5b5b5"></div>
<div class="box" style="left:953.7px;top:527.5px;width:38.9px;height:23.2px;"></div>
<div class="t" style="left:958.5px;top:533.5px;font-size:11.5px;color:#3e3e3e;letter-spacing:-0.2px">100%</div>
<svg style="left:998px;top:533.0px" width="16" height="12" viewBox="0 0 16 12"><path d="M1.2 6C3 2.8 5.3 1.5 8 1.5S13 2.8 14.8 6C13 9.2 10.7 10.5 8 10.5S3 9.2 1.2 6z" fill="#6e6e6e"/><circle cx="8" cy="6" r="2.6" fill="#fff"/><circle cx="8" cy="6" r="1.5" fill="#6e6e6e"/></svg>
<div class="hdr" style="left:725px;top:556.3px;width:299px;height:32.7px;border-top:1px solid #d9d9d9;border-bottom:1px solid #d9d9d9"></div>
<div class="t" style="left:730.0px;top:567.4px;font-size:12.2px;color:#555;letter-spacing:-0.1px">Effects</div>
<div class="dd" style="left:778.0px;top:571.3px;border-top-color:#666;border-top-width:4.5px"></div>
<svg style="left:999px;top:564.8px" width="16" height="16" viewBox="0 0 16 16"><circle cx="8" cy="8" r="6.6" fill="none" stroke="#6e6e6e" stroke-width="1.3"/><path d="M8 4.4V11.6M4.4 8H11.6" stroke="#6e6e6e" stroke-width="1.6"/></svg>
<div class="a" style="left:725px;top:613px;width:299px;height:1px;background:#e2e2e2"></div>
<div class="t" style="left:735.0px;top:594.7px;font-size:12.4px;color:#444;letter-spacing:-0.05px">Blur</div>
<svg style="left:1002px;top:596px" width="10" height="10" viewBox="0 0 10 10"><path d="M5 0.5V9.5M0.5 5H9.5" stroke="#555" stroke-width="1.2"/></svg>
<div class="a" style="left:725px;top:638px;width:299px;height:1px;background:#e2e2e2"></div>
<div class="t" style="left:735.0px;top:619.7px;font-size:12.4px;color:#444;letter-spacing:-0.05px">Color Adjust</div>
<svg style="left:1002px;top:621px" width="10" height="10" viewBox="0 0 10 10"><path d="M5 0.5V9.5M0.5 5H9.5" stroke="#555" stroke-width="1.2"/></svg>
<div class="a" style="left:725px;top:663px;width:299px;height:1px;background:#e2e2e2"></div>
<div class="t" style="left:735.0px;top:644.7px;font-size:12.4px;color:#444;letter-spacing:-0.35px">Drop Shadow</div>
<svg style="left:1002px;top:646px" width="10" height="10" viewBox="0 0 10 10"><path d="M5 0.5V9.5M0.5 5H9.5" stroke="#555" stroke-width="1.2"/></svg>
<div class="a" style="left:725px;top:688px;width:299px;height:1px;background:#e2e2e2"></div>
<div class="t" style="left:735.0px;top:669.7px;font-size:12.4px;color:#444;letter-spacing:-0.35px">Inner Shadow</div>
<svg style="left:1002px;top:671px" width="10" height="10" viewBox="0 0 10 10"><path d="M5 0.5V9.5M0.5 5H9.5" stroke="#555" stroke-width="1.2"/></svg>
<div class="a" style="left:725px;top:713px;width:299px;height:1px;background:#e2e2e2"></div>
<div class="t" style="left:735.0px;top:694.7px;font-size:12.4px;color:#444;letter-spacing:-0.05px">More</div>
<svg style="left:1002px;top:696px" width="10" height="10" viewBox="0 0 10 10"><path d="M5 0.5V9.5M0.5 5H9.5" stroke="#555" stroke-width="1.2"/></svg>
</div></body></html>
